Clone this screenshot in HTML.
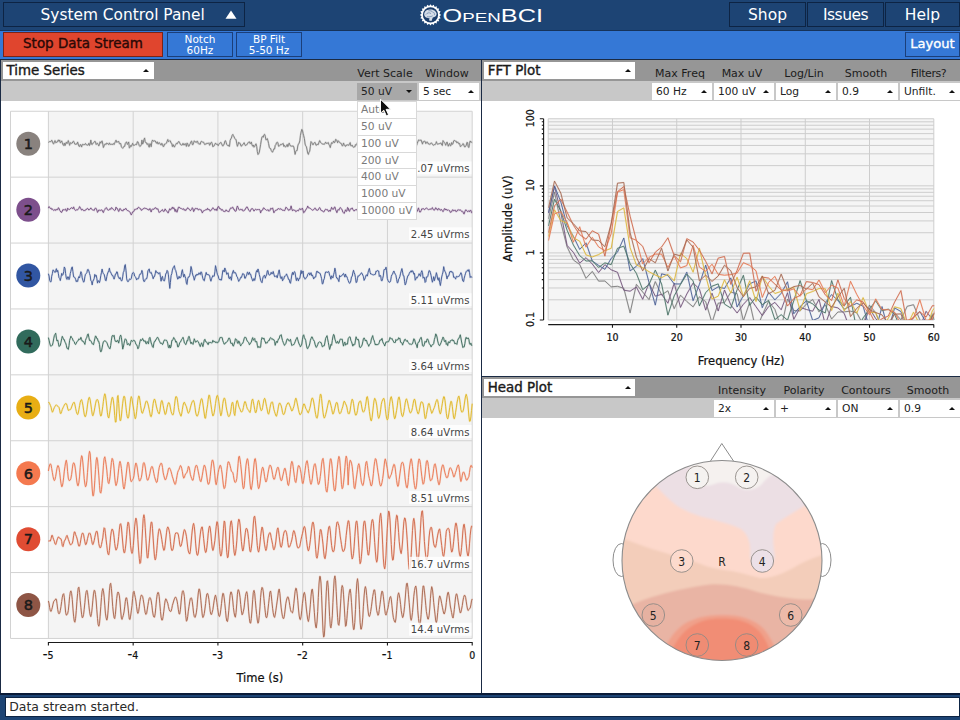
<!DOCTYPE html>
<html lang="en"><head><meta charset="utf-8"><title>OpenBCI GUI</title>
<style>
html,body{margin:0;padding:0}
body{width:960px;height:720px;overflow:hidden;background:#fff;position:relative;font-family:"DejaVu Sans","Liberation Sans",sans-serif;color:#1a1a1a}
div,span{box-sizing:border-box}
.abs{position:absolute}
#topnav{left:0;top:0;width:960px;height:30px;background:#1d4474}
#subnav{left:0;top:30px;width:960px;height:29px;background:#3578d6;border-top:1px solid #16335a}
.tbtn{position:absolute;top:2px;height:25px;background:#1d4474;border:1px solid #0d2444;color:#fff;font-size:15.5px;line-height:24px;text-align:center;white-space:nowrap}
.sbtn{position:absolute;top:32px;height:24.5px;background:#3578d6;border:1px solid #1b3f7a;color:#fff;font-size:10.5px;line-height:10.5px;text-align:center;white-space:nowrap}
.whead{position:absolute;height:21px;background:#969696}
.wsub{position:absolute;height:20.4px;background:#c8c8c8}
.wtitle{position:absolute;height:17px;background:#fff;font-size:13.4px;line-height:17px;padding-left:4px;white-space:nowrap;-webkit-text-stroke:.4px #1a1a1a}
.lab{position:absolute;font-size:11px;line-height:13px;text-align:center;white-space:nowrap;color:#1c1c1c;width:70px;margin-left:-35px}
.dd{position:absolute;width:60px;height:17px;background:#fff;font-size:10.7px;line-height:18px;padding-left:4px;white-space:nowrap;color:#222}
.tri{position:absolute;width:0;height:0;border-left:3px solid transparent;border-right:3px solid transparent;border-bottom:3.5px solid #111}
.trid{position:absolute;width:0;height:0;border-left:3px solid transparent;border-right:3px solid transparent;border-top:3.5px solid #111}
.item{position:absolute;left:357px;width:60px;height:17px;background:#fff;border:1px solid #d9d9d9;font-size:10.7px;line-height:16px;padding-left:3px;color:#7a7a7a;white-space:nowrap}
</style></head><body>
<div id="topnav" class="abs"></div>
<div id="subnav" class="abs"></div>
<div class="tbtn" style="left:3px;width:241.5px;text-align:left;padding-left:36.5px;line-height:24px;font-size:15.4px">System Control Panel</div>
<svg class="abs" style="left:224px;top:9px" width="14" height="11"><polygon points="1.5,9.8 7,1.5 12.5,9.8" fill="#fff"/></svg>
<div class="tbtn" style="left:729px;width:77px">Shop</div>
<div class="tbtn" style="left:807px;width:77px;letter-spacing:-.5px">Issues</div>
<div class="tbtn" style="left:885px;width:75px">Help</div>
<svg class="abs" style="left:414px;top:2px" width="132" height="26" viewBox="0 0 132 26">
<polygon points="16.50,2.20 17.89,4.11 19.81,2.72 20.54,4.97 22.79,4.24 22.79,6.61 25.16,6.61 24.43,8.86 26.68,9.59 25.29,11.51 27.20,12.90 25.29,14.29 26.68,16.21 24.43,16.94 25.16,19.19 22.79,19.19 22.79,21.56 20.54,20.83 19.81,23.08 17.89,21.69 16.50,23.60 15.11,21.69 13.19,23.08 12.46,20.83 10.21,21.56 10.21,19.19 7.84,19.19 8.57,16.94 6.32,16.21 7.71,14.29 5.80,12.90 7.71,11.51 6.32,9.59 8.57,8.86 7.84,6.61 10.21,6.61 10.21,4.24 12.46,4.97 13.19,2.72 15.11,4.11" fill="#fff"/>
<circle cx="16.5" cy="12.9" r="9.1" fill="#fff"/>
<circle cx="16.5" cy="12.9" r="7.6" fill="#1d3f6c"/>
<path d="M10.4 13.6c-.9-3.2 1.8-6 5.2-6 2.9-.5 6.6 1.2 7 4 .3 2.2-1.5 3.7-3.800 4l-1.3 3.4-2.4-.6.3-2.3c-2.5.2-4.4-.7-5-2.5z" fill="#d5dde8"/>
<path d="M11.8 12.6c1.4-2 3.6-2.3 5.200-1m-2.6-2.800c1.800-.5 3.800.3 4.800 1.800m-6 4c1.800.5 3.800.2 5.4-.8m.8-3.6c.9.7 1.3 1.800 1 2.900" fill="none" stroke="#5f7ea6" stroke-width=".7"/>
<text x="28.6" y="19.7" font-family="&quot;Liberation Sans&quot;,&quot;DejaVu Sans&quot;,sans-serif" fill="#fff" font-size="17.5" textLength="100.4" lengthAdjust="spacingAndGlyphs">O<tspan font-size="13">PEN</tspan>BCI</text>
</svg>
<div class="sbtn" style="left:3px;width:160px;background:#e0452e;border-color:#7a2418;color:#2a0906;font-size:13.45px;line-height:22px;-webkit-text-stroke:.38px #2a0906">Stop Data Stream</div>
<div class="sbtn" style="left:167px;width:66px;padding-top:1px">Notch<br>60Hz</div>
<div class="sbtn" style="left:236px;width:66px;padding-top:1px">BP Filt<br>5-50 Hz</div>
<div class="sbtn" style="left:905px;width:55px;font-size:13.1px;line-height:22.5px;-webkit-text-stroke:.35px #fff">Layout</div>
<div class="abs" style="left:0;top:59px;width:960px;height:1px;background:#1a2a44"></div>
<div class="whead" style="left:0px;top:60px;width:481px"></div>
<div class="wsub" style="left:0px;top:81px;width:481px"></div>
<div class="wtitle" style="left:2.5px;top:62px;width:151.5px">Time Series</div>
<div class="tri" style="left:143px;top:69px"></div>
<div class="lab" style="left:385px;top:67px">Vert Scale</div>
<div class="lab" style="left:447px;top:67px">Window</div>
<div class="dd" style="left:357px;top:83px;background:#a8a8a8">50 uV</div>
<div class="trid" style="left:406px;top:90px"></div>
<div class="dd" style="left:419px;top:83px">5 sec</div>
<div class="tri" style="left:468px;top:90px"></div>
<div class="whead" style="left:482px;top:60px;width:478px"></div>
<div class="wsub" style="left:482px;top:81px;width:478px"></div>
<div class="wtitle" style="left:483.7px;top:62px;width:151.5px">FFT Plot</div>
<div class="tri" style="left:625px;top:69px"></div>
<div class="lab" style="left:680px;top:67px">Max Freq</div>
<div class="lab" style="left:742px;top:67px">Max uV</div>
<div class="lab" style="left:804px;top:67px">Log/Lin</div>
<div class="lab" style="left:866px;top:67px">Smooth</div>
<div class="lab" style="left:928.5px;top:67px"><span style="letter-spacing:-.4px">Filters?</span></div>
<div class="dd" style="left:652px;top:83px">60 Hz</div>
<div class="tri" style="left:701px;top:90px"></div>
<div class="dd" style="left:714px;top:83px">100 uV</div>
<div class="tri" style="left:763px;top:90px"></div>
<div class="dd" style="left:776px;top:83px">Log</div>
<div class="tri" style="left:825px;top:90px"></div>
<div class="dd" style="left:838px;top:83px">0.9</div>
<div class="tri" style="left:887px;top:90px"></div>
<div class="dd" style="left:900px;top:83px">Unfilt.</div>
<div class="tri" style="left:949px;top:90px"></div>
<div class="whead" style="left:482px;top:377px;width:478px"></div>
<div class="wsub" style="left:482px;top:398px;width:478px"></div>
<div class="wtitle" style="left:483.7px;top:379px;width:151.5px">Head Plot</div>
<div class="tri" style="left:625px;top:386px"></div>
<div class="lab" style="left:742px;top:384px">Intensity</div>
<div class="lab" style="left:804px;top:384px">Polarity</div>
<div class="lab" style="left:866px;top:384px">Contours</div>
<div class="lab" style="left:928px;top:384px">Smooth</div>
<div class="dd" style="left:714px;top:400px">2x</div>
<div class="tri" style="left:763px;top:407px"></div>
<div class="dd" style="left:776px;top:400px">+</div>
<div class="tri" style="left:825px;top:407px"></div>
<div class="dd" style="left:838px;top:400px">ON</div>
<div class="tri" style="left:887px;top:407px"></div>
<div class="dd" style="left:900px;top:400px">0.9</div>
<div class="tri" style="left:949px;top:407px"></div>
<div class="abs" style="left:0;top:60px;width:1px;height:634px;background:#1a2a44"></div>
<div class="abs" style="left:480.5px;top:59px;width:1.6px;height:635px;background:#1a2a44"></div>
<div class="abs" style="left:481px;top:376px;width:479px;height:1px;background:#1a2a44"></div>
<svg class="abs" style="left:0;top:101px" width="481" height="592" viewBox="0 101 481 592" font-family='&quot;DejaVu Sans Condensed&quot;,&quot;DejaVu Sans&quot;,&quot;Liberation Sans&quot;,sans-serif'>
<rect x="48.4" y="111.25" width="423.8" height="527.2" fill="#f4f4f4"/>
<path d="M48.40 111.25V638.45M133.16 111.25V638.45M217.92 111.25V638.45M302.68 111.25V638.45M387.44 111.25V638.45M472.20 111.25V638.45M10.5 111.25H472.20M10.5 177.15H472.20M10.5 243.05H472.20M10.5 308.95H472.20M10.5 374.85H472.20M10.5 440.75H472.20M10.5 506.65H472.20M10.5 572.55H472.20M10.5 638.45H472.20M10.5 111.25V638.45" fill="none" stroke="#d2d2d2" stroke-width="1"/>
<defs><path id="w1" d="M48.4 142.4L49.1 141.9L49.7 141.5L50.4 141.6L51.1 141.6L51.7 140.2L52.4 141.2L53.0 143.5L53.7 143.9L54.4 141.8L55.0 140.6L55.7 142.7L56.4 142.4L57.0 142.4L57.7 140.6L58.3 140.0L59.0 141.4L59.7 140.1L60.3 142.8L61.0 142.4L61.7 140.9L62.3 142.6L63.0 144.7L63.7 145.5L64.3 143.1L65.0 145.6L65.6 144.0L66.3 142.2L67.0 143.6L67.6 142.6L68.3 140.6L69.0 142.9L69.6 145.3L70.3 143.0L70.9 142.5L71.6 143.5L72.3 143.0L72.9 141.6L73.6 141.2L74.3 142.8L74.9 144.2L75.6 144.3L76.3 143.9L76.9 144.3L77.6 142.0L78.2 144.0L78.9 146.2L79.6 146.5L80.2 144.6L80.9 144.8L81.6 147.0L82.2 144.7L82.9 144.1L83.6 144.8L84.2 144.5L84.9 144.7L85.5 143.5L86.2 144.6L86.9 145.0L87.5 145.2L88.2 145.0L88.9 143.2L89.5 145.5L90.2 143.9L90.8 140.1L91.5 144.2L92.2 144.6L92.8 143.2L93.5 142.8L94.2 142.3L94.8 141.2L95.5 141.9L96.2 144.5L96.8 143.6L97.5 143.3L98.1 144.4L98.8 145.9L99.5 144.1L100.1 141.8L100.8 143.2L101.5 141.4L102.1 140.9L102.8 144.1L103.4 147.5L104.1 145.8L104.8 144.2L105.4 144.0L106.1 144.5L106.8 143.1L107.4 143.5L108.1 143.8L108.8 144.7L109.4 142.9L110.1 144.2L110.7 144.5L111.4 144.3L112.1 144.2L112.7 144.6L113.4 143.5L114.1 144.5L114.7 143.2L115.4 141.5L116.0 140.2L116.7 142.3L117.4 141.9L118.0 141.8L118.7 141.4L119.4 143.7L120.0 143.8L120.7 143.4L121.4 146.8L122.0 147.6L122.7 148.3L123.3 147.6L124.0 146.2L124.7 146.3L125.3 143.5L126.0 142.3L126.7 142.0L127.3 144.4L128.0 143.8L128.7 142.0L129.3 147.9L130.0 147.4L130.6 145.5L131.3 146.4L132.0 144.8L132.6 143.3L133.3 145.3L134.0 145.0L134.6 145.2L135.3 144.7L135.9 144.1L136.6 144.7L137.3 141.8L137.9 141.8L138.6 143.5L139.3 145.7L139.9 146.5L140.6 145.9L141.3 144.8L141.9 140.1L142.6 144.1L143.2 143.0L143.9 139.8L144.6 138.0L145.2 141.8L145.9 142.8L146.6 142.9L147.2 144.5L147.9 143.6L148.5 145.7L149.2 147.2L149.9 143.6L150.5 144.0L151.2 146.7L151.9 141.5L152.5 140.1L153.2 141.3L153.9 140.9L154.5 140.8L155.2 140.9L155.8 142.2L156.5 143.3L157.2 141.8L157.8 143.8L158.5 143.9L159.2 142.5L159.8 143.4L160.5 144.6L161.1 145.1L161.8 143.3L162.5 144.3L163.1 146.5L163.8 146.4L164.5 144.1L165.1 144.3L165.8 143.5L166.5 143.1L167.1 141.3L167.8 139.5L168.4 141.6L169.1 141.4L169.8 140.6L170.4 141.0L171.1 143.2L171.8 143.5L172.4 146.6L173.1 144.6L173.7 146.0L174.4 147.1L175.1 145.6L175.7 144.6L176.4 143.3L177.1 143.9L177.7 143.0L178.4 141.7L179.1 141.6L179.7 142.8L180.4 144.4L181.0 144.9L181.7 145.1L182.4 144.8L183.0 143.3L183.7 144.9L184.4 144.9L185.0 143.5L185.7 144.1L186.4 146.4L187.0 143.0L187.7 143.6L188.3 146.1L189.0 146.2L189.7 144.4L190.3 143.6L191.0 141.5L191.7 141.1L192.3 144.6L193.0 144.7L193.6 142.9L194.3 140.8L195.0 141.8L195.6 142.0L196.3 142.5L197.0 141.1L197.6 141.4L198.3 143.6L199.0 144.3L199.6 143.8L200.3 144.2L200.9 141.7L201.6 141.3L202.3 142.0L202.9 142.3L203.6 142.2L204.3 143.8L204.9 144.7L205.6 143.8L206.2 144.1L206.9 143.2L207.6 143.4L208.2 143.5L208.9 142.8L209.6 145.3L210.2 144.5L210.9 142.6L211.6 142.2L212.2 143.7L212.9 146.8L213.5 146.0L214.2 145.8L214.9 144.2L215.5 143.1L216.2 144.2L216.9 144.4L217.5 144.2L218.2 145.7L218.8 144.4L219.5 143.4L220.2 143.3L220.8 142.3L221.5 143.4L222.2 145.2L222.8 146.1L223.5 145.1L224.2 144.0L224.8 141.3L225.5 140.7L226.1 142.4L226.8 144.6L227.5 145.4L228.1 145.0L228.8 146.2L229.5 146.3L230.1 140.6L230.8 138.9L231.4 138.1L232.1 135.5L232.8 134.4L233.4 135.6L234.1 136.9L234.8 138.6L235.4 139.0L236.1 139.8L236.8 143.8L237.4 146.3L238.1 144.4L238.7 142.3L239.4 143.2L240.1 143.3L240.7 145.4L241.4 146.3L242.1 144.8L242.7 144.7L243.4 144.1L244.1 142.7L244.7 144.2L245.4 145.6L246.0 145.0L246.7 144.9L247.4 143.9L248.0 142.8L248.7 142.1L249.4 141.8L250.0 143.6L250.7 143.5L251.3 142.0L252.0 144.9L252.7 146.2L253.3 145.0L254.0 147.2L254.7 146.4L255.3 144.9L256.0 143.8L256.7 146.5L257.3 151.4L258.0 154.5L258.6 153.8L259.3 152.2L260.0 148.2L260.6 144.5L261.3 140.2L262.0 136.9L262.6 136.5L263.3 137.2L263.9 134.9L264.6 134.3L265.3 136.2L265.9 139.8L266.6 139.7L267.3 138.6L267.9 140.6L268.6 143.6L269.3 147.3L269.9 148.4L270.6 148.5L271.2 150.4L271.9 151.7L272.6 152.1L273.2 150.7L273.9 148.8L274.6 149.0L275.2 145.5L275.9 144.6L276.5 142.7L277.2 142.2L277.9 142.7L278.5 146.2L279.2 146.2L279.9 145.4L280.5 144.4L281.2 144.7L281.9 144.1L282.5 143.9L283.2 143.4L283.8 146.4L284.5 145.4L285.2 146.8L285.8 146.8L286.5 146.2L287.2 144.4L287.8 146.7L288.5 144.9L289.2 143.1L289.8 144.8L290.5 146.0L291.1 146.4L291.8 146.0L292.5 146.2L293.1 145.8L293.8 146.9L294.5 150.8L295.1 154.4L295.8 151.4L296.4 150.6L297.1 150.6L297.8 145.9L298.4 144.1L299.1 143.2L299.8 140.9L300.4 135.7L301.1 132.1L301.8 129.4L302.4 130.2L303.1 133.4L303.7 135.8L304.4 138.6L305.1 144.1L305.7 145.8L306.4 146.7L307.1 150.0L307.7 153.0L308.4 154.4L309.0 152.2L309.7 151.3L310.4 146.2L311.0 141.6L311.7 142.4L312.4 143.8L313.0 144.9L313.7 143.4L314.4 142.7L315.0 142.3L315.7 144.7L316.3 145.4L317.0 144.1L317.7 144.5L318.3 144.6L319.0 142.2L319.7 140.6L320.3 142.2L321.0 142.6L321.6 143.3L322.3 144.1L323.0 144.0L323.6 144.2L324.3 144.4L325.0 143.2L325.6 142.1L326.3 143.4L327.0 143.3L327.6 143.1L328.3 142.5L328.9 144.5L329.6 145.7L330.3 147.6L330.9 144.8L331.6 142.6L332.3 143.5L332.9 142.6L333.6 141.0L334.2 142.7L334.9 142.3L335.6 139.4L336.2 139.6L336.9 140.8L337.6 142.8L338.2 140.7L338.9 141.5L339.6 142.5L340.2 143.0L340.9 143.1L341.5 144.1L342.2 145.8L342.9 145.7L343.5 143.0L344.2 144.7L344.9 145.8L345.5 146.4L346.2 144.9L346.9 145.5L347.5 144.7L348.2 145.2L348.8 145.3L349.5 143.6L350.2 142.6L350.8 145.8L351.5 145.9L352.2 145.1L352.8 146.7L353.5 147.2L354.1 146.7L354.8 147.0L355.5 144.6L356.1 145.2L356.8 144.4L357.5 142.4L358.1 145.0L358.8 144.0L359.5 144.2L360.1 144.5L360.8 143.4L361.4 142.5L362.1 141.8L362.8 141.5L363.4 141.0L364.1 143.4L364.8 142.5L365.4 143.7L366.1 142.9L366.7 138.3L367.4 139.2L368.1 140.6L368.7 141.9L369.4 142.0L370.1 142.8L370.7 142.8L371.4 142.7L372.1 142.1L372.7 144.3L373.4 143.7L374.0 143.6L374.7 144.7L375.4 144.8L376.0 144.2L376.7 144.2L377.4 146.9L378.0 148.9L378.7 143.8L379.3 141.1L380.0 141.6L380.7 143.0L381.3 143.1L382.0 140.7L382.7 141.9L383.3 142.8L384.0 145.4L384.7 146.0L385.3 142.7L386.0 141.6L386.6 141.8L387.3 145.1L388.0 144.7L388.6 143.1L389.3 141.6L390.0 142.4L390.6 145.1L391.3 144.7L391.9 144.1L392.6 144.0L393.3 142.8L393.9 143.3L394.6 144.4L395.3 144.7L395.9 145.5L396.6 144.1L397.3 145.7L397.9 145.3L398.6 142.4L399.2 143.6L399.9 145.2L400.6 143.2L401.2 141.9L401.9 140.8L402.6 140.6L403.2 141.5L403.9 144.3L404.6 146.7L405.2 148.0L405.9 148.2L406.5 145.7L407.2 145.6L407.9 145.0L408.5 142.9L409.2 143.7L409.9 144.5L410.5 143.5L411.2 144.1L411.8 145.3L412.5 147.0L413.2 146.9L413.8 146.2L414.5 145.4L415.2 145.2L415.8 144.8L416.5 145.7L417.2 143.6L417.8 141.9L418.5 140.1L419.1 139.8L419.8 140.6L420.5 140.2L421.1 140.0L421.8 142.0L422.5 144.1L423.1 141.6L423.8 141.8L424.4 141.3L425.1 141.4L425.8 143.6L426.4 142.9L427.1 141.8L427.8 142.8L428.4 144.0L429.1 143.7L429.8 144.5L430.4 143.5L431.1 142.9L431.7 143.1L432.4 144.2L433.1 145.1L433.7 145.2L434.4 144.6L435.1 144.7L435.7 143.9L436.4 141.7L437.0 143.6L437.7 144.2L438.4 143.9L439.0 143.9L439.7 143.5L440.4 143.3L441.0 142.9L441.7 144.9L442.4 145.5L443.0 140.6L443.7 141.6L444.3 142.4L445.0 143.4L445.7 145.3L446.3 143.7L447.0 142.0L447.7 144.4L448.3 146.2L449.0 144.1L449.7 143.5L450.3 145.8L451.0 145.5L451.6 142.6L452.3 144.3L453.0 143.8L453.6 141.0L454.3 140.3L455.0 141.1L455.6 141.2L456.3 141.3L456.9 142.9L457.6 141.9L458.3 142.9L458.9 143.9L459.6 143.4L460.3 146.5L460.9 146.4L461.6 145.6L462.3 144.8L462.9 143.6L463.6 144.0L464.2 146.2L464.9 147.1L465.6 145.9L466.2 145.6L466.9 142.4L467.6 142.6L468.2 146.9L468.9 147.5L469.5 143.5L470.2 141.0L470.9 142.3L471.5 142.1L472.2 142.7"/></defs>
<use href="#w1" fill="none" stroke="#b0b0b0" stroke-opacity=".4" stroke-width="1.9" stroke-linejoin="round"/>
<use href="#w1" fill="none" stroke="#7f7f7f" stroke-width=".95" stroke-linejoin="round"/>
<circle cx="28.3" cy="143.8" r="12" fill="#89827e"/>
<text x="28.3" y="149.0" text-anchor="middle" font-size="14.5" fill="#1a1a1a" stroke="#1a1a1a" stroke-width=".5" font-family="&quot;DejaVu Sans&quot;,&quot;Liberation Sans&quot;,sans-serif">1</text>
<rect x="409" y="161.4" width="62.5" height="13" fill="#fff" fill-opacity=".8"/>
<text x="469.5" y="172.1" text-anchor="end" font-size="11.2" letter-spacing=".1" fill="#444">1.07 uVrms</text>
<defs><path id="w2" d="M48.4 208.2L49.1 206.6L49.7 207.5L50.4 208.5L51.1 208.1L51.7 209.4L52.4 208.9L53.0 209.8L53.7 210.5L54.4 210.1L55.0 209.4L55.7 210.5L56.4 209.4L57.0 209.5L57.7 209.7L58.3 207.8L59.0 208.2L59.7 210.4L60.3 210.9L61.0 212.2L61.7 212.4L62.3 211.0L63.0 209.4L63.7 209.9L64.3 210.1L65.0 209.3L65.6 209.0L66.3 211.1L67.0 211.0L67.6 208.2L68.3 209.2L69.0 209.1L69.6 209.5L70.3 208.9L70.9 208.0L71.6 207.7L72.3 208.0L72.9 208.8L73.6 206.9L74.3 208.7L74.9 209.8L75.6 210.5L76.3 210.2L76.9 209.4L77.6 209.8L78.2 209.4L78.9 208.3L79.6 206.6L80.2 207.4L80.9 208.8L81.6 210.2L82.2 209.2L82.9 209.6L83.6 210.6L84.2 210.4L84.9 210.8L85.5 210.1L86.2 209.1L86.9 209.3L87.5 208.4L88.2 208.9L88.9 210.1L89.5 209.4L90.2 209.0L90.8 207.9L91.5 209.2L92.2 209.5L92.8 210.1L93.5 210.1L94.2 210.5L94.8 209.0L95.5 207.9L96.2 208.7L96.8 209.9L97.5 212.4L98.1 211.5L98.8 210.0L99.5 210.2L100.1 210.7L100.8 210.2L101.5 209.9L102.1 210.1L102.8 211.9L103.4 212.6L104.1 210.5L104.8 209.6L105.4 208.3L106.1 207.6L106.8 208.1L107.4 209.7L108.1 210.1L108.8 210.1L109.4 209.7L110.1 208.6L110.7 209.4L111.4 207.7L112.1 207.9L112.7 208.7L113.4 209.6L114.1 210.1L114.7 210.6L115.4 210.0L116.0 207.1L116.7 208.4L117.4 208.5L118.0 210.1L118.7 211.5L119.4 209.9L120.0 208.4L120.7 209.4L121.4 210.4L122.0 210.1L122.7 211.1L123.3 210.4L124.0 209.0L124.7 209.7L125.3 208.7L126.0 208.4L126.7 209.9L127.3 210.5L128.0 210.7L128.7 211.0L129.3 211.4L130.0 212.1L130.6 213.8L131.3 214.9L132.0 213.4L132.6 211.9L133.3 211.9L134.0 211.1L134.6 209.4L135.3 209.3L135.9 209.5L136.6 208.9L137.3 209.0L137.9 207.7L138.6 207.2L139.3 208.0L139.9 208.5L140.6 208.7L141.3 210.3L141.9 210.2L142.6 209.2L143.2 208.6L143.9 208.8L144.6 207.9L145.2 208.4L145.9 208.5L146.6 208.6L147.2 209.4L147.9 209.1L148.5 210.1L149.2 209.9L149.9 208.5L150.5 210.6L151.2 212.0L151.9 209.7L152.5 209.0L153.2 209.3L153.9 209.3L154.5 208.2L155.2 207.8L155.8 207.7L156.5 209.0L157.2 209.2L157.8 208.7L158.5 210.8L159.2 212.5L159.8 211.9L160.5 211.7L161.1 210.7L161.8 210.2L162.5 209.6L163.1 211.2L163.8 211.5L164.5 211.0L165.1 208.9L165.8 210.2L166.5 210.7L167.1 211.6L167.8 212.8L168.4 212.8L169.1 210.2L169.8 208.7L170.4 210.0L171.1 209.5L171.8 208.2L172.4 207.1L173.1 208.9L173.7 207.6L174.4 208.7L175.1 211.5L175.7 209.4L176.4 211.7L177.1 212.2L177.7 210.0L178.4 207.3L179.1 207.0L179.7 207.9L180.4 208.3L181.0 208.2L181.7 208.9L182.4 209.3L183.0 208.8L183.7 208.8L184.4 210.3L185.0 209.6L185.7 210.6L186.4 209.3L187.0 209.0L187.7 207.7L188.3 208.5L189.0 209.2L189.7 209.4L190.3 210.7L191.0 210.2L191.7 209.4L192.3 207.7L193.0 208.8L193.6 211.6L194.3 210.6L195.0 208.6L195.6 208.4L196.3 208.7L197.0 208.4L197.6 208.6L198.3 210.0L199.0 209.4L199.6 209.3L200.3 209.9L200.9 209.5L201.6 210.9L202.3 212.9L202.9 211.9L203.6 210.7L204.3 210.6L204.9 210.2L205.6 209.8L206.2 209.4L206.9 210.0L207.6 208.3L208.2 209.5L208.9 209.6L209.6 209.7L210.2 211.2L210.9 210.3L211.6 209.8L212.2 208.8L212.9 207.7L213.5 208.7L214.2 209.1L214.9 210.3L215.5 209.8L216.2 208.9L216.9 210.6L217.5 208.1L218.2 206.5L218.8 206.7L219.5 208.6L220.2 208.6L220.8 208.8L221.5 210.3L222.2 209.4L222.8 210.3L223.5 211.4L224.2 211.3L224.8 211.8L225.5 211.0L226.1 209.8L226.8 210.9L227.5 211.2L228.1 211.2L228.8 211.8L229.5 210.2L230.1 208.9L230.8 207.8L231.4 208.2L232.1 207.6L232.8 207.1L233.4 209.1L234.1 209.1L234.8 210.9L235.4 211.3L236.1 211.0L236.8 207.6L237.4 206.0L238.1 207.5L238.7 209.4L239.4 209.9L240.1 209.9L240.7 209.2L241.4 209.7L242.1 209.2L242.7 210.7L243.4 211.1L244.1 210.3L244.7 210.2L245.4 209.0L246.0 208.0L246.7 206.9L247.4 207.2L248.0 208.7L248.7 210.1L249.4 210.8L250.0 211.6L250.7 210.2L251.3 208.9L252.0 208.6L252.7 208.7L253.3 209.7L254.0 211.1L254.7 209.9L255.3 209.3L256.0 209.5L256.7 209.9L257.3 209.7L258.0 209.3L258.6 210.0L259.3 209.3L260.0 210.2L260.6 213.0L261.3 210.7L262.0 210.6L262.6 210.1L263.3 208.1L263.9 207.8L264.6 208.9L265.3 209.4L265.9 209.7L266.6 210.4L267.3 210.2L267.9 209.6L268.6 211.0L269.3 211.1L269.9 210.5L270.6 208.4L271.2 208.7L271.9 208.9L272.6 207.9L273.2 210.1L273.9 212.8L274.6 211.6L275.2 210.6L275.9 210.2L276.5 210.1L277.2 209.9L277.9 208.7L278.5 208.6L279.2 208.7L279.9 209.5L280.5 208.6L281.2 209.3L281.9 209.4L282.5 210.4L283.2 210.4L283.8 210.1L284.5 210.8L285.2 209.4L285.8 207.3L286.5 207.5L287.2 208.6L287.8 209.0L288.5 210.4L289.2 209.5L289.8 210.1L290.5 208.4L291.1 205.9L291.8 208.9L292.5 210.8L293.1 209.9L293.8 210.0L294.5 210.3L295.1 210.3L295.8 211.7L296.4 211.4L297.1 210.4L297.8 210.5L298.4 210.8L299.1 209.5L299.8 208.5L300.4 209.6L301.1 209.7L301.8 208.7L302.4 208.1L303.1 210.5L303.7 212.8L304.4 212.2L305.1 210.9L305.7 210.0L306.4 208.8L307.1 207.9L307.7 206.0L308.4 207.8L309.0 208.0L309.7 208.0L310.4 208.5L311.0 208.9L311.7 209.6L312.4 210.3L313.0 209.9L313.7 209.7L314.4 208.6L315.0 207.9L315.7 208.7L316.3 210.1L317.0 210.0L317.7 210.3L318.3 209.8L319.0 208.2L319.7 207.6L320.3 208.5L321.0 210.4L321.6 210.6L322.3 210.8L323.0 211.2L323.6 212.0L324.3 211.5L325.0 209.7L325.6 209.3L326.3 209.7L327.0 209.5L327.6 209.7L328.3 211.2L328.9 211.5L329.6 210.3L330.3 211.3L330.9 209.5L331.6 207.3L332.3 209.0L332.9 209.4L333.6 209.2L334.2 207.4L334.9 206.9L335.6 209.6L336.2 211.0L336.9 212.7L337.6 210.4L338.2 209.5L338.9 210.3L339.6 208.3L340.2 207.5L340.9 208.2L341.5 208.9L342.2 210.0L342.9 212.2L343.5 212.7L344.2 213.4L344.9 211.5L345.5 209.8L346.2 211.4L346.9 211.0L347.5 207.5L348.2 208.0L348.8 210.7L349.5 211.4L350.2 209.1L350.8 208.8L351.5 208.9L352.2 207.9L352.8 209.4L353.5 210.4L354.1 211.1L354.8 210.1L355.5 209.8L356.1 209.8L356.8 209.4L357.5 211.0L358.1 211.3L358.8 210.2L359.5 209.8L360.1 209.6L360.8 209.6L361.4 209.9L362.1 210.6L362.8 211.9L363.4 211.7L364.1 212.1L364.8 211.6L365.4 211.0L366.1 208.2L366.7 208.2L367.4 209.1L368.1 209.2L368.7 210.3L369.4 211.9L370.1 211.7L370.7 210.6L371.4 208.2L372.1 208.0L372.7 208.1L373.4 209.9L374.0 209.5L374.7 208.3L375.4 210.5L376.0 210.6L376.7 209.9L377.4 209.6L378.0 209.3L378.7 209.5L379.3 208.5L380.0 209.6L380.7 211.0L381.3 209.4L382.0 206.3L382.7 207.3L383.3 208.4L384.0 211.0L384.7 212.6L385.3 210.8L386.0 210.3L386.6 210.6L387.3 209.5L388.0 210.0L388.6 210.8L389.3 209.8L390.0 211.5L390.6 213.5L391.3 214.1L391.9 213.6L392.6 211.7L393.3 209.7L393.9 208.0L394.6 209.0L395.3 209.9L395.9 207.8L396.6 208.5L397.3 211.2L397.9 210.9L398.6 210.1L399.2 210.0L399.9 209.7L400.6 210.7L401.2 208.8L401.9 206.8L402.6 208.9L403.2 210.0L403.9 209.2L404.6 210.5L405.2 210.7L405.9 210.8L406.5 212.3L407.2 210.1L407.9 209.4L408.5 209.6L409.2 208.8L409.9 206.3L410.5 206.7L411.2 208.8L411.8 209.3L412.5 209.2L413.2 209.2L413.8 210.1L414.5 211.3L415.2 211.3L415.8 212.4L416.5 212.1L417.2 211.3L417.8 209.5L418.5 207.9L419.1 210.3L419.8 212.1L420.5 211.9L421.1 210.6L421.8 208.8L422.5 208.9L423.1 208.6L423.8 208.8L424.4 209.7L425.1 209.0L425.8 208.7L426.4 207.9L427.1 208.5L427.8 209.2L428.4 209.6L429.1 209.6L429.8 209.1L430.4 209.0L431.1 209.5L431.7 208.6L432.4 207.6L433.1 209.5L433.7 209.8L434.4 210.2L435.1 209.0L435.7 207.7L436.4 209.0L437.0 208.9L437.7 210.2L438.4 208.5L439.0 208.9L439.7 209.1L440.4 210.4L441.0 209.5L441.7 209.7L442.4 210.7L443.0 211.7L443.7 210.6L444.3 208.8L445.0 208.6L445.7 210.0L446.3 209.2L447.0 210.4L447.7 210.1L448.3 209.8L449.0 210.5L449.7 210.7L450.3 212.4L451.0 212.1L451.6 211.8L452.3 210.1L453.0 209.7L453.6 210.8L454.3 210.6L455.0 209.9L455.6 211.1L456.3 211.9L456.9 211.2L457.6 210.0L458.3 209.6L458.9 210.4L459.6 210.0L460.3 209.9L460.9 210.3L461.6 211.5L462.3 211.1L462.9 211.7L463.6 213.7L464.2 213.9L464.9 211.5L465.6 209.9L466.2 209.9L466.9 210.9L467.6 211.7L468.2 211.5L468.9 210.6L469.5 211.7L470.2 210.5L470.9 210.3L471.5 212.7L472.2 212.2"/></defs>
<use href="#w2" fill="none" stroke="#c0a0c8" stroke-opacity=".4" stroke-width="1.9" stroke-linejoin="round"/>
<use href="#w2" fill="none" stroke="#75557f" stroke-width=".95" stroke-linejoin="round"/>
<circle cx="28.3" cy="209.7" r="12" fill="#7d4f8c"/>
<text x="28.3" y="214.9" text-anchor="middle" font-size="14.5" fill="#1a1a1a" stroke="#1a1a1a" stroke-width=".5" font-family="&quot;DejaVu Sans&quot;,&quot;Liberation Sans&quot;,sans-serif">2</text>
<rect x="409" y="227.3" width="62.5" height="13" fill="#fff" fill-opacity=".8"/>
<text x="469.5" y="238.0" text-anchor="end" font-size="11.2" letter-spacing=".1" fill="#444">2.45 uVrms</text>
<defs><path id="w3" d="M48.4 273.7L49.1 276.1L49.7 280.4L50.4 281.8L51.1 281.7L51.7 276.2L52.4 273.6L53.0 269.9L53.7 270.5L54.4 271.7L55.0 272.5L55.7 270.5L56.4 268.7L57.0 272.0L57.7 270.3L58.3 273.3L59.0 277.7L59.7 278.5L60.3 280.6L61.0 277.2L61.7 273.4L62.3 275.4L63.0 274.6L63.7 271.7L64.3 267.0L65.0 268.3L65.6 273.6L66.3 278.2L67.0 279.4L67.6 276.9L68.3 276.9L69.0 279.6L69.6 278.3L70.3 273.4L70.9 271.2L71.6 267.9L72.3 266.9L72.9 271.5L73.6 276.9L74.3 277.2L74.9 277.5L75.6 279.4L76.3 281.7L76.9 280.6L77.6 281.5L78.2 278.5L78.9 276.6L79.6 277.8L80.2 274.8L80.9 271.7L81.6 273.4L82.2 277.9L82.9 280.3L83.6 282.2L84.2 281.4L84.9 276.7L85.5 274.3L86.2 273.6L86.9 272.5L87.5 269.7L88.2 269.4L88.9 271.1L89.5 273.5L90.2 275.7L90.8 280.4L91.5 281.3L92.2 284.9L92.8 281.3L93.5 280.0L94.2 278.5L94.8 274.4L95.5 276.3L96.2 275.3L96.8 278.3L97.5 283.1L98.1 280.7L98.8 281.0L99.5 282.6L100.1 280.1L100.8 275.6L101.5 272.3L102.1 269.1L102.8 272.4L103.4 273.6L104.1 274.3L104.8 277.0L105.4 280.3L106.1 280.8L106.8 276.6L107.4 274.1L108.1 272.1L108.8 270.6L109.4 268.2L110.1 272.1L110.7 272.2L111.4 273.9L112.1 275.5L112.7 275.3L113.4 277.4L114.1 279.1L114.7 277.2L115.4 274.2L116.0 274.1L116.7 271.8L117.4 272.1L118.0 276.0L118.7 277.7L119.4 278.8L120.0 277.4L120.7 279.5L121.4 280.8L122.0 280.7L122.7 276.9L123.3 272.5L124.0 271.1L124.7 265.7L125.3 264.6L126.0 270.6L126.7 278.9L127.3 280.9L128.0 281.8L128.7 280.8L129.3 279.3L130.0 278.8L130.6 279.5L131.3 278.4L132.0 274.6L132.6 273.0L133.3 272.4L134.0 273.2L134.6 276.0L135.3 276.6L135.9 277.8L136.6 279.9L137.3 278.5L137.9 279.1L138.6 278.5L139.3 275.7L139.9 274.2L140.6 274.2L141.3 272.9L141.9 270.4L142.6 272.6L143.2 279.2L143.9 281.5L144.6 281.4L145.2 279.4L145.9 278.7L146.6 278.9L147.2 276.8L147.9 270.9L148.5 270.0L149.2 268.9L149.9 272.6L150.5 272.9L151.2 272.3L151.9 274.5L152.5 276.3L153.2 278.8L153.9 276.5L154.5 276.6L155.2 273.8L155.8 270.6L156.5 271.7L157.2 273.0L157.8 272.4L158.5 274.1L159.2 273.3L159.8 272.6L160.5 277.4L161.1 281.2L161.8 277.2L162.5 276.4L163.1 280.0L163.8 280.7L164.5 280.8L165.1 277.8L165.8 273.5L166.5 273.2L167.1 270.4L167.8 271.5L168.4 274.8L169.1 282.0L169.8 288.4L170.4 282.5L171.1 275.5L171.8 273.5L172.4 270.1L173.1 267.8L173.7 267.0L174.4 265.7L175.1 269.4L175.7 270.4L176.4 273.1L177.1 276.9L177.7 279.1L178.4 278.6L179.1 276.3L179.7 278.0L180.4 277.8L181.0 276.9L181.7 272.1L182.4 269.7L183.0 273.6L183.7 277.1L184.4 274.3L185.0 276.4L185.7 278.3L186.4 283.3L187.0 284.4L187.7 278.8L188.3 277.0L189.0 277.1L189.7 275.4L190.3 272.7L191.0 266.5L191.7 269.0L192.3 272.9L193.0 275.7L193.6 276.9L194.3 280.2L195.0 277.6L195.6 275.2L196.3 275.6L197.0 274.0L197.6 275.0L198.3 274.7L199.0 272.8L199.6 274.1L200.3 274.6L200.9 271.9L201.6 272.3L202.3 275.9L202.9 278.6L203.6 280.2L204.3 280.8L204.9 277.7L205.6 274.5L206.2 272.4L206.9 274.8L207.6 274.1L208.2 275.1L208.9 274.7L209.6 275.6L210.2 278.9L210.9 281.2L211.6 278.6L212.2 277.2L212.9 275.6L213.5 276.3L214.2 276.2L214.9 271.8L215.5 265.7L216.2 268.6L216.9 272.2L217.5 274.8L218.2 275.9L218.8 278.5L219.5 279.8L220.2 279.1L220.8 280.2L221.5 280.0L222.2 275.2L222.8 270.5L223.5 270.3L224.2 272.0L224.8 268.0L225.5 269.7L226.1 271.7L226.8 274.4L227.5 273.2L228.1 272.8L228.8 278.0L229.5 278.8L230.1 276.7L230.8 278.0L231.4 280.3L232.1 274.1L232.8 272.0L233.4 270.4L234.1 273.2L234.8 272.4L235.4 272.6L236.1 274.1L236.8 276.4L237.4 277.1L238.1 279.5L238.7 281.4L239.4 280.4L240.1 278.9L240.7 277.3L241.4 277.6L242.1 275.4L242.7 273.6L243.4 274.0L244.1 274.3L244.7 278.2L245.4 278.2L246.0 276.3L246.7 275.2L247.4 272.1L248.0 272.7L248.7 274.6L249.4 272.2L250.0 274.4L250.7 274.3L251.3 277.0L252.0 278.9L252.7 280.9L253.3 280.6L254.0 278.5L254.7 280.4L255.3 277.8L256.0 272.7L256.7 270.6L257.3 272.1L258.0 269.0L258.6 270.8L259.3 274.5L260.0 277.3L260.6 280.2L261.3 281.7L262.0 282.7L262.6 279.2L263.3 276.4L263.9 276.0L264.6 275.2L265.3 278.2L265.9 276.1L266.6 275.1L267.3 270.8L267.9 270.5L268.6 274.4L269.3 275.0L269.9 275.0L270.6 273.9L271.2 272.3L271.9 274.0L272.6 273.5L273.2 271.5L273.9 274.2L274.6 276.6L275.2 276.6L275.9 275.9L276.5 275.8L277.2 277.8L277.9 274.9L278.5 272.3L279.2 269.9L279.9 274.3L280.5 277.8L281.2 278.7L281.9 276.7L282.5 280.8L283.2 279.6L283.8 278.9L284.5 276.2L285.2 276.3L285.8 275.7L286.5 273.9L287.2 275.5L287.8 276.9L288.5 279.4L289.2 279.4L289.8 282.3L290.5 283.3L291.1 279.7L291.8 275.0L292.5 272.4L293.1 274.8L293.8 272.6L294.5 271.6L295.1 272.8L295.8 277.8L296.4 280.6L297.1 277.8L297.8 278.8L298.4 280.9L299.1 278.4L299.8 278.5L300.4 275.0L301.1 270.5L301.8 273.7L302.4 272.1L303.1 271.0L303.7 277.3L304.4 277.5L305.1 279.2L305.7 278.5L306.4 277.3L307.1 276.8L307.7 274.3L308.4 273.5L309.0 272.8L309.7 275.1L310.4 274.2L311.0 272.7L311.7 275.7L312.4 274.9L313.0 276.8L313.7 279.0L314.4 277.2L315.0 277.4L315.7 277.0L316.3 272.8L317.0 271.0L317.7 272.4L318.3 272.0L319.0 273.1L319.7 273.0L320.3 273.9L321.0 276.4L321.6 278.7L322.3 283.9L323.0 283.6L323.6 280.1L324.3 278.7L325.0 274.2L325.6 272.0L326.3 272.0L327.0 272.2L327.6 272.5L328.3 271.4L328.9 271.9L329.6 275.3L330.3 276.6L330.9 279.2L331.6 275.8L332.3 277.0L332.9 277.9L333.6 274.6L334.2 272.6L334.9 268.2L335.6 271.5L336.2 276.8L336.9 278.4L337.6 278.2L338.2 280.0L338.9 281.6L339.6 275.5L340.2 276.9L340.9 276.2L341.5 275.8L342.2 275.4L342.9 274.1L343.5 273.5L344.2 275.1L344.9 277.1L345.5 274.1L346.2 276.4L346.9 276.6L347.5 278.6L348.2 280.5L348.8 282.1L349.5 283.3L350.2 282.7L350.8 281.0L351.5 276.8L352.2 276.4L352.8 273.0L353.5 270.3L354.1 272.4L354.8 274.2L355.5 277.7L356.1 282.6L356.8 282.1L357.5 278.4L358.1 275.7L358.8 276.2L359.5 275.5L360.1 274.3L360.8 274.1L361.4 272.8L362.1 273.4L362.8 275.2L363.4 276.5L364.1 280.4L364.8 279.0L365.4 277.6L366.1 275.1L366.7 274.9L367.4 276.1L368.1 272.3L368.7 270.2L369.4 268.4L370.1 272.4L370.7 274.0L371.4 274.1L372.1 274.3L372.7 274.7L373.4 275.1L374.0 274.3L374.7 274.6L375.4 274.3L376.0 271.1L376.7 271.4L377.4 270.5L378.0 271.1L378.7 271.0L379.3 276.5L380.0 275.3L380.7 275.8L381.3 280.5L382.0 280.9L382.7 278.4L383.3 275.9L384.0 269.6L384.7 269.5L385.3 269.5L386.0 267.2L386.6 270.8L387.3 278.4L388.0 280.4L388.6 281.7L389.3 282.3L390.0 282.0L390.6 280.8L391.3 276.6L391.9 274.7L392.6 274.2L393.3 271.9L393.9 271.0L394.6 272.8L395.3 274.3L395.9 275.3L396.6 279.3L397.3 282.9L397.9 282.6L398.6 279.2L399.2 278.4L399.9 276.4L400.6 273.2L401.2 271.1L401.9 268.6L402.6 272.1L403.2 275.6L403.9 275.8L404.6 281.6L405.2 284.9L405.9 283.4L406.5 280.7L407.2 278.0L407.9 275.6L408.5 275.5L409.2 273.6L409.9 272.1L410.5 272.0L411.2 270.7L411.8 272.2L412.5 270.7L413.2 271.8L413.8 274.2L414.5 273.4L415.2 280.2L415.8 279.2L416.5 277.3L417.2 277.9L417.8 276.6L418.5 275.5L419.1 273.7L419.8 275.2L420.5 276.3L421.1 272.5L421.8 270.7L422.5 272.7L423.1 278.2L423.8 277.2L424.4 277.5L425.1 282.4L425.8 281.7L426.4 276.9L427.1 277.3L427.8 276.3L428.4 273.4L429.1 270.5L429.8 271.0L430.4 272.7L431.1 275.6L431.7 279.0L432.4 282.2L433.1 279.7L433.7 276.7L434.4 280.7L435.1 277.9L435.7 276.3L436.4 272.7L437.0 275.0L437.7 279.3L438.4 280.3L439.0 277.7L439.7 282.7L440.4 285.5L441.0 281.4L441.7 277.0L442.4 274.3L443.0 272.0L443.7 266.7L444.3 269.6L445.0 271.5L445.7 272.8L446.3 275.2L447.0 278.9L447.7 276.2L448.3 276.4L449.0 275.0L449.7 271.8L450.3 272.0L451.0 271.0L451.6 272.2L452.3 271.9L453.0 272.9L453.6 277.3L454.3 277.1L455.0 277.7L455.6 279.1L456.3 276.5L456.9 276.2L457.6 277.0L458.3 276.4L458.9 276.6L459.6 275.4L460.3 274.1L460.9 272.7L461.6 274.1L462.3 278.9L462.9 281.1L463.6 281.6L464.2 278.2L464.9 275.5L465.6 273.2L466.2 271.6L466.9 270.7L467.6 270.1L468.2 271.4L468.9 269.6L469.5 272.3L470.2 277.5L470.9 276.4L471.5 277.2L472.2 277.3"/></defs>
<use href="#w3" fill="none" stroke="#9ab0dc" stroke-opacity=".4" stroke-width="1.9" stroke-linejoin="round"/>
<use href="#w3" fill="none" stroke="#465c92" stroke-width=".95" stroke-linejoin="round"/>
<circle cx="28.3" cy="275.6" r="12" fill="#3156a2"/>
<text x="28.3" y="280.8" text-anchor="middle" font-size="14.5" fill="#1a1a1a" stroke="#1a1a1a" stroke-width=".5" font-family="&quot;DejaVu Sans&quot;,&quot;Liberation Sans&quot;,sans-serif">3</text>
<rect x="409" y="293.2" width="62.5" height="13" fill="#fff" fill-opacity=".8"/>
<text x="469.5" y="303.9" text-anchor="end" font-size="11.2" letter-spacing=".1" fill="#444">5.11 uVrms</text>
<defs><path id="w4" d="M48.4 337.6L49.1 340.3L49.7 343.0L50.4 345.7L51.1 346.3L51.7 345.5L52.4 345.2L53.0 342.8L53.7 338.9L54.4 335.5L55.0 334.4L55.7 333.2L56.4 338.1L57.0 341.0L57.7 340.0L58.3 342.7L59.0 346.5L59.7 346.0L60.3 345.3L61.0 342.2L61.7 338.6L62.3 336.3L63.0 338.0L63.7 339.7L64.3 339.6L65.0 342.2L65.6 342.9L66.3 345.2L67.0 348.4L67.6 348.4L68.3 349.4L69.0 345.7L69.6 340.4L70.3 338.2L70.9 336.2L71.6 337.6L72.3 338.2L72.9 340.1L73.6 341.2L74.3 341.8L74.9 343.9L75.6 344.5L76.3 343.2L76.9 341.7L77.6 341.1L78.2 340.7L78.9 338.8L79.6 339.4L80.2 339.5L80.9 337.3L81.6 339.5L82.2 341.2L82.9 340.9L83.6 342.1L84.2 342.9L84.9 344.4L85.5 340.3L86.2 338.5L86.9 337.2L87.5 334.5L88.2 333.9L88.9 337.5L89.5 340.5L90.2 340.2L90.8 340.8L91.5 342.1L92.2 343.8L92.8 343.9L93.5 344.7L94.2 341.5L94.8 338.8L95.5 335.9L96.2 336.7L96.8 338.6L97.5 338.6L98.1 341.3L98.8 341.3L99.5 344.6L100.1 349.9L100.8 351.9L101.5 350.9L102.1 347.9L102.8 344.1L103.4 341.8L104.1 341.1L104.8 340.8L105.4 340.9L106.1 341.8L106.8 342.6L107.4 343.9L108.1 346.2L108.8 347.2L109.4 348.5L110.1 348.7L110.7 345.4L111.4 340.1L112.1 335.9L112.7 335.4L113.4 336.4L114.1 335.3L114.7 339.4L115.4 341.4L116.0 340.9L116.7 341.9L117.4 340.2L118.0 340.8L118.7 343.1L119.4 339.6L120.0 336.3L120.7 335.1L121.4 337.4L122.0 342.8L122.7 349.1L123.3 347.4L124.0 343.5L124.7 340.2L125.3 338.8L126.0 339.5L126.7 341.3L127.3 344.7L128.0 344.1L128.7 343.6L129.3 345.1L130.0 345.5L130.6 342.8L131.3 340.3L132.0 341.0L132.6 341.4L133.3 340.4L134.0 340.2L134.6 340.7L135.3 342.2L135.9 344.3L136.6 344.7L137.3 346.4L137.9 348.8L138.6 347.8L139.3 344.7L139.9 341.8L140.6 339.5L141.3 340.5L141.9 340.2L142.6 338.5L143.2 339.8L143.9 341.4L144.6 341.0L145.2 340.8L145.9 343.6L146.6 343.7L147.2 341.5L147.9 342.7L148.5 343.8L149.2 338.3L149.9 337.4L150.5 339.8L151.2 343.0L151.9 344.9L152.5 346.8L153.2 347.5L153.9 343.1L154.5 341.3L155.2 341.3L155.8 339.5L156.5 339.2L157.2 337.4L157.8 337.4L158.5 338.6L159.2 340.8L159.8 341.8L160.5 343.4L161.1 343.4L161.8 343.1L162.5 344.6L163.1 343.6L163.8 341.1L164.5 340.0L165.1 339.7L165.8 340.5L166.5 340.3L167.1 341.4L167.8 343.8L168.4 347.4L169.1 347.9L169.8 345.0L170.4 348.0L171.1 346.2L171.8 340.5L172.4 340.5L173.1 339.2L173.7 337.5L174.4 338.5L175.1 339.9L175.7 342.2L176.4 341.3L177.1 343.5L177.7 346.9L178.4 346.8L179.1 345.0L179.7 342.6L180.4 342.2L181.0 340.9L181.7 339.3L182.4 338.5L183.0 337.3L183.7 339.7L184.4 342.9L185.0 343.2L185.7 344.7L186.4 343.5L187.0 340.4L187.7 340.9L188.3 337.6L189.0 336.3L189.7 338.5L190.3 341.6L191.0 343.7L191.7 342.2L192.3 343.7L193.0 344.4L193.6 342.2L194.3 338.8L195.0 340.7L195.6 342.2L196.3 341.8L197.0 340.7L197.6 341.1L198.3 341.7L199.0 343.5L199.6 345.3L200.3 346.6L200.9 344.5L201.6 342.8L202.3 344.9L202.9 346.6L203.6 343.4L204.3 340.0L204.9 339.3L205.6 341.6L206.2 341.8L206.9 342.3L207.6 344.0L208.2 344.7L208.9 342.2L209.6 342.7L210.2 342.5L210.9 342.3L211.6 343.2L212.2 342.5L212.9 340.3L213.5 341.7L214.2 341.8L214.9 341.3L215.5 342.5L216.2 342.7L216.9 341.8L217.5 342.8L218.2 342.4L218.8 341.4L219.5 338.9L220.2 337.3L220.8 337.9L221.5 337.1L222.2 337.8L222.8 340.7L223.5 342.4L224.2 344.2L224.8 344.0L225.5 342.7L226.1 342.7L226.8 341.7L227.5 341.3L228.1 339.9L228.8 338.1L229.5 338.2L230.1 339.8L230.8 343.3L231.4 343.5L232.1 342.9L232.8 345.6L233.4 346.2L234.1 344.1L234.8 341.8L235.4 338.8L236.1 339.3L236.8 339.8L237.4 343.0L238.1 343.5L238.7 341.0L239.4 341.6L240.1 344.5L240.7 345.9L241.4 344.5L242.1 343.5L242.7 343.3L243.4 341.7L244.1 338.8L244.7 337.3L245.4 337.4L246.0 337.6L246.7 339.9L247.4 341.3L248.0 342.0L248.7 342.5L249.4 344.8L250.0 344.0L250.7 342.6L251.3 342.2L252.0 339.3L252.7 337.6L253.3 340.3L254.0 339.2L254.7 338.5L255.3 341.8L256.0 341.7L256.7 341.5L257.3 345.2L258.0 347.7L258.6 346.5L259.3 346.7L260.0 347.7L260.6 346.9L261.3 340.3L262.0 337.6L262.6 338.5L263.3 339.0L263.9 338.1L264.6 340.6L265.3 342.0L265.9 343.5L266.6 342.5L267.3 342.8L267.9 341.4L268.6 340.4L269.3 340.5L269.9 338.5L270.6 337.6L271.2 338.4L271.9 339.4L272.6 338.8L273.2 339.8L273.9 339.7L274.6 341.3L275.2 345.3L275.9 342.6L276.5 341.4L277.2 342.7L277.9 340.6L278.5 338.9L279.2 338.7L279.9 335.6L280.5 335.4L281.2 334.7L281.9 338.0L282.5 340.5L283.2 342.3L283.8 343.8L284.5 345.4L285.2 344.3L285.8 343.5L286.5 340.9L287.2 339.0L287.8 338.9L288.5 340.1L289.2 341.2L289.8 340.6L290.5 339.3L291.1 342.6L291.8 345.5L292.5 345.2L293.1 344.6L293.8 344.7L294.5 343.3L295.1 341.8L295.8 339.9L296.4 338.6L297.1 337.4L297.8 339.8L298.4 341.9L299.1 344.0L299.8 345.3L300.4 346.8L301.1 345.7L301.8 344.1L302.4 339.8L303.1 335.8L303.7 334.8L304.4 337.6L305.1 339.0L305.7 340.4L306.4 345.1L307.1 348.3L307.7 348.7L308.4 347.0L309.0 346.2L309.7 344.0L310.4 340.4L311.0 338.6L311.7 336.9L312.4 337.2L313.0 339.5L313.7 340.1L314.4 341.4L315.0 344.1L315.7 346.3L316.3 347.4L317.0 346.2L317.7 344.7L318.3 342.8L319.0 342.4L319.7 341.7L320.3 342.5L321.0 342.4L321.6 344.2L322.3 346.7L323.0 346.6L323.6 345.6L324.3 345.7L325.0 342.1L325.6 338.4L326.3 337.1L327.0 335.7L327.6 338.9L328.3 342.3L328.9 345.7L329.6 349.4L330.3 347.0L330.9 344.4L331.6 345.3L332.3 340.4L332.9 336.8L333.6 334.4L334.2 335.2L334.9 339.1L335.6 341.1L336.2 343.1L336.9 342.7L337.6 341.3L338.2 343.3L338.9 343.1L339.6 340.9L340.2 339.2L340.9 339.1L341.5 339.3L342.2 339.1L342.9 343.5L343.5 346.1L344.2 343.1L344.9 342.1L345.5 345.2L346.2 343.9L346.9 343.9L347.5 344.1L348.2 338.7L348.8 337.8L349.5 336.8L350.2 337.1L350.8 340.3L351.5 341.7L352.2 343.9L352.8 346.1L353.5 344.3L354.1 345.1L354.8 344.4L355.5 340.1L356.1 336.8L356.8 338.8L357.5 340.0L358.1 339.1L358.8 341.0L359.5 346.9L360.1 347.6L360.8 347.2L361.4 346.3L362.1 345.0L362.8 341.8L363.4 338.8L364.1 337.9L364.8 339.2L365.4 341.0L366.1 340.0L366.7 340.8L367.4 343.8L368.1 344.3L368.7 346.3L369.4 344.6L370.1 343.8L370.7 342.9L371.4 338.8L372.1 337.2L372.7 335.6L373.4 339.2L374.0 340.1L374.7 342.7L375.4 345.0L376.0 344.0L376.7 345.1L377.4 344.4L378.0 344.7L378.7 343.9L379.3 342.4L380.0 340.0L380.7 340.0L381.3 340.0L382.0 338.4L382.7 341.7L383.3 343.1L384.0 344.0L384.7 346.0L385.3 344.2L386.0 341.9L386.6 342.0L387.3 341.8L388.0 341.8L388.6 341.7L389.3 339.9L390.0 337.5L390.6 338.5L391.3 339.1L391.9 338.4L392.6 339.9L393.3 341.1L393.9 342.5L394.6 342.5L395.3 342.5L395.9 339.5L396.6 340.4L397.3 339.8L397.9 339.8L398.6 337.7L399.2 338.8L399.9 338.2L400.6 342.3L401.2 342.4L401.9 342.9L402.6 345.1L403.2 343.1L403.9 341.5L404.6 339.6L405.2 339.2L405.9 340.4L406.5 341.3L407.2 340.4L407.9 342.1L408.5 342.7L409.2 343.8L409.9 344.4L410.5 344.1L411.2 344.6L411.8 344.1L412.5 343.8L413.2 341.3L413.8 338.8L414.5 339.3L415.2 342.1L415.8 344.1L416.5 344.9L417.2 347.7L417.8 343.2L418.5 342.1L419.1 342.0L419.8 339.2L420.5 338.3L421.1 337.3L421.8 340.1L422.5 345.6L423.1 346.3L423.8 346.0L424.4 344.1L425.1 341.3L425.8 342.4L426.4 342.0L427.1 339.0L427.8 339.2L428.4 340.5L429.1 343.3L429.8 344.6L430.4 344.9L431.1 346.9L431.7 345.6L432.4 344.7L433.1 344.6L433.7 343.5L434.4 339.4L435.1 337.2L435.7 333.9L436.4 334.9L437.0 337.0L437.7 341.0L438.4 343.6L439.0 345.2L439.7 345.6L440.4 344.1L441.0 342.8L441.7 340.7L442.4 338.8L443.0 337.1L443.7 338.1L444.3 341.2L445.0 341.9L445.7 340.3L446.3 344.4L447.0 343.6L447.7 345.6L448.3 341.9L449.0 342.1L449.7 343.0L450.3 340.7L451.0 340.6L451.6 340.2L452.3 339.6L453.0 341.0L453.6 340.2L454.3 342.2L455.0 344.0L455.6 343.3L456.3 343.6L456.9 344.4L457.6 340.7L458.3 338.7L458.9 338.5L459.6 336.5L460.3 334.8L460.9 338.0L461.6 342.0L462.3 345.1L462.9 347.6L463.6 346.7L464.2 346.9L464.9 343.6L465.6 338.4L466.2 337.3L466.9 339.0L467.6 338.2L468.2 337.9L468.9 339.5L469.5 343.7L470.2 344.5L470.9 343.1L471.5 345.4L472.2 345.4"/></defs>
<use href="#w4" fill="none" stroke="#98c0b0" stroke-opacity=".4" stroke-width="1.9" stroke-linejoin="round"/>
<use href="#w4" fill="none" stroke="#446c61" stroke-width=".95" stroke-linejoin="round"/>
<circle cx="28.3" cy="341.5" r="12" fill="#316b5c"/>
<text x="28.3" y="346.7" text-anchor="middle" font-size="14.5" fill="#1a1a1a" stroke="#1a1a1a" stroke-width=".5" font-family="&quot;DejaVu Sans&quot;,&quot;Liberation Sans&quot;,sans-serif">4</text>
<rect x="409" y="359.1" width="62.5" height="13" fill="#fff" fill-opacity=".8"/>
<text x="469.5" y="369.8" text-anchor="end" font-size="11.2" letter-spacing=".1" fill="#444">3.64 uVrms</text>
<defs><path id="w5" d="M48.4 402.5L49.1 402.4L49.7 403.8L50.4 405.4L51.1 407.3L51.7 410.2L52.4 412.2L53.0 411.2L53.7 409.1L54.4 407.5L55.0 406.4L55.7 405.3L56.4 404.9L57.0 405.6L57.7 406.2L58.3 406.6L59.0 407.4L59.7 410.2L60.3 413.3L61.0 413.5L61.7 411.4L62.3 409.4L63.0 407.8L63.7 406.4L64.3 405.2L65.0 404.0L65.6 403.5L66.3 403.7L67.0 405.2L67.6 408.0L68.3 410.3L69.0 410.4L69.6 409.7L70.3 409.6L70.9 408.9L71.6 406.9L72.3 405.1L72.9 403.6L73.6 402.5L74.3 402.4L74.9 404.6L75.6 408.2L76.3 411.4L76.9 413.4L77.6 414.5L78.2 413.3L78.9 409.7L79.6 405.6L80.2 402.4L80.9 400.2L81.6 399.6L82.2 401.6L82.9 405.2L83.6 410.1L84.2 414.1L84.9 416.5L85.5 416.6L86.2 414.2L86.9 409.9L87.5 404.9L88.2 400.6L88.9 397.7L89.5 397.4L90.2 400.1L90.8 404.1L91.5 409.2L92.2 414.2L92.8 415.8L93.5 414.1L94.2 411.1L94.8 407.8L95.5 403.9L96.2 400.8L96.8 399.7L97.5 399.6L98.1 400.7L98.8 403.9L99.5 409.2L100.1 413.9L100.8 416.1L101.5 415.0L102.1 411.1L102.8 406.3L103.4 401.4L104.1 396.3L104.8 393.8L105.4 395.2L106.1 400.4L106.8 406.9L107.4 412.8L108.1 417.0L108.8 418.0L109.4 414.8L110.1 410.2L110.7 405.5L111.4 400.9L112.1 397.5L112.7 397.5L113.4 400.8L114.1 407.0L114.7 415.4L115.4 422.0L116.0 422.0L116.7 411.9L117.4 397.1L118.0 395.5L118.7 403.4L119.4 413.9L120.0 420.5L120.7 420.5L121.4 416.0L122.0 409.5L122.7 403.2L123.3 398.6L124.0 396.2L124.7 397.0L125.3 401.1L126.0 407.6L126.7 413.7L127.3 417.0L128.0 418.2L128.7 416.8L129.3 411.8L130.0 405.0L130.6 399.2L131.3 396.6L132.0 398.7L132.6 403.0L133.3 407.0L134.0 411.4L134.6 416.5L135.3 418.8L135.9 417.1L136.6 411.9L137.3 405.6L137.9 399.6L138.6 396.1L139.3 396.4L139.9 400.3L140.6 405.6L141.3 410.2L141.9 412.9L142.6 413.2L143.2 411.3L143.9 409.1L144.6 407.0L145.2 404.1L145.9 401.7L146.6 400.9L147.2 401.8L147.9 403.8L148.5 406.1L149.2 409.6L149.9 413.3L150.5 416.2L151.2 416.7L151.9 414.2L152.5 408.7L153.2 403.3L153.9 400.1L154.5 399.1L155.2 400.5L155.8 403.6L156.5 407.0L157.2 409.6L157.8 411.6L158.5 413.2L159.2 413.9L159.8 411.4L160.5 406.0L161.1 402.0L161.8 400.5L162.5 401.9L163.1 405.3L163.8 408.9L164.5 412.0L165.1 414.5L165.8 413.9L166.5 411.0L167.1 407.5L167.8 404.5L168.4 402.8L169.1 402.8L169.8 404.7L170.4 408.0L171.1 411.5L171.8 413.6L172.4 414.7L173.1 414.8L173.7 412.4L174.4 406.5L175.1 400.2L175.7 396.8L176.4 396.6L177.1 398.2L177.7 402.2L178.4 407.6L179.1 411.4L179.7 412.9L180.4 415.0L181.0 416.2L181.7 413.8L182.4 409.3L183.0 405.6L183.7 402.9L184.4 402.2L185.0 403.7L185.7 405.3L186.4 406.6L187.0 409.0L187.7 411.8L188.3 413.2L189.0 412.5L189.7 410.6L190.3 407.9L191.0 405.2L191.7 403.1L192.3 401.6L193.0 400.5L193.6 400.7L194.3 402.6L195.0 407.3L195.6 412.0L196.3 414.9L197.0 416.2L197.6 415.7L198.3 413.7L199.0 410.5L199.6 406.5L200.3 403.0L200.9 399.9L201.6 398.6L202.3 400.0L202.9 403.9L203.6 409.0L204.3 414.0L204.9 418.1L205.6 418.2L206.2 413.7L206.9 408.9L207.6 404.8L208.2 399.4L208.9 395.2L209.6 395.4L210.2 399.3L210.9 404.3L211.6 409.2L212.2 413.3L212.9 416.0L213.5 415.2L214.2 412.7L214.9 408.2L215.5 403.7L216.2 399.0L216.9 395.8L217.5 395.4L218.2 397.8L218.8 401.7L219.5 407.0L220.2 412.8L220.8 415.8L221.5 414.3L222.2 409.3L222.8 403.6L223.5 399.7L224.2 398.1L224.8 398.5L225.5 401.7L226.1 406.2L226.8 410.3L227.5 413.2L228.1 415.6L228.8 416.6L229.5 415.8L230.1 414.4L230.8 411.3L231.4 406.4L232.1 402.7L232.8 402.4L233.4 406.1L234.1 413.5L234.8 415.5L235.4 410.8L236.1 404.7L236.8 400.9L237.4 400.6L238.1 403.1L238.7 406.1L239.4 407.8L240.1 409.3L240.7 411.1L241.4 412.0L242.1 411.7L242.7 410.5L243.4 407.5L244.1 403.9L244.7 401.7L245.4 401.8L246.0 403.8L246.7 406.7L247.4 408.8L248.0 409.6L248.7 410.4L249.4 411.8L250.0 412.5L250.7 409.6L251.3 404.1L252.0 400.0L252.7 399.1L253.3 401.5L254.0 405.5L254.7 409.4L255.3 412.4L256.0 412.6L256.7 409.7L257.3 405.3L258.0 401.3L258.6 400.3L259.3 402.4L260.0 406.3L260.6 409.4L261.3 410.7L262.0 409.9L262.6 407.4L263.3 403.2L263.9 399.8L264.6 398.3L265.3 399.7L265.9 403.1L266.6 406.7L267.3 410.0L267.9 413.2L268.6 414.2L269.3 412.0L269.9 408.3L270.6 404.7L271.2 402.7L271.9 401.9L272.6 402.3L273.2 405.4L273.9 409.4L274.6 411.8L275.2 413.7L275.9 415.8L276.5 416.2L277.2 413.6L277.9 409.9L278.5 406.1L279.2 403.4L279.9 403.1L280.5 404.3L281.2 405.8L281.9 408.8L282.5 412.4L283.2 414.3L283.8 414.5L284.5 413.4L285.2 410.8L285.8 407.6L286.5 405.4L287.2 404.0L287.8 403.0L288.5 402.8L289.2 404.0L289.8 405.8L290.5 407.2L291.1 409.3L291.8 411.0L292.5 410.5L293.1 408.6L293.8 406.7L294.5 403.8L295.1 400.2L295.8 398.2L296.4 399.3L297.1 402.7L297.8 406.2L298.4 409.2L299.1 412.3L299.8 414.5L300.4 414.6L301.1 413.5L301.8 412.1L302.4 409.5L303.1 405.9L303.7 404.0L304.4 404.1L305.1 406.1L305.7 408.3L306.4 409.4L307.1 410.7L307.7 412.4L308.4 412.8L309.0 410.9L309.7 408.6L310.4 406.0L311.0 402.2L311.7 398.9L312.4 397.9L313.0 399.1L313.7 402.0L314.4 406.2L315.0 410.6L315.7 414.5L316.3 417.3L317.0 418.2L317.7 416.1L318.3 411.2L319.0 404.7L319.7 398.6L320.3 394.4L321.0 394.5L321.6 398.7L322.3 405.8L323.0 412.2L323.6 416.3L324.3 418.1L325.0 416.8L325.6 414.7L326.3 412.0L327.0 408.8L327.6 405.9L328.3 402.8L328.9 400.4L329.6 400.6L330.3 403.0L330.9 405.3L331.6 408.3L332.3 412.2L332.9 414.1L333.6 413.2L334.2 410.9L334.9 408.1L335.6 405.0L336.2 402.8L336.9 402.4L337.6 404.0L338.2 408.1L338.9 411.8L339.6 413.6L340.2 413.5L340.9 412.5L341.5 410.5L342.2 408.4L342.9 406.2L343.5 403.1L344.2 401.1L344.9 402.1L345.5 403.8L346.2 405.0L346.9 407.2L347.5 410.7L348.2 413.4L348.8 414.0L349.5 413.2L350.2 410.0L350.8 405.5L351.5 401.3L352.2 399.2L352.8 400.2L353.5 403.4L354.1 407.8L354.8 412.3L355.5 415.0L356.1 415.1L356.8 413.5L357.5 410.4L358.1 406.2L358.8 403.0L359.5 401.6L360.1 400.9L360.8 401.5L361.4 404.8L362.1 408.9L362.8 411.5L363.4 412.2L364.1 411.3L364.8 409.5L365.4 406.5L366.1 401.9L366.7 397.2L367.4 396.6L368.1 400.3L368.7 405.8L369.4 411.4L370.1 416.4L370.7 420.1L371.4 420.9L372.1 417.6L372.7 412.0L373.4 405.9L374.0 400.8L374.7 398.3L375.4 399.4L376.0 401.6L376.7 405.1L377.4 410.7L378.0 416.3L378.7 418.4L379.3 417.1L380.0 414.3L380.7 409.3L381.3 404.3L382.0 401.4L382.7 399.9L383.3 398.6L384.0 398.5L384.7 402.1L385.3 408.3L386.0 414.5L386.6 418.3L387.3 419.9L388.0 418.7L388.6 413.3L389.3 406.6L390.0 401.3L390.6 397.6L391.3 396.7L391.9 399.0L392.6 403.2L393.3 409.7L393.9 415.6L394.6 418.8L395.3 417.8L395.9 414.2L396.6 410.4L397.3 405.9L397.9 400.5L398.6 397.3L399.2 397.1L399.9 400.4L400.6 406.9L401.2 412.3L401.9 415.4L402.6 416.6L403.2 415.0L403.9 411.7L404.6 407.3L405.2 402.9L405.9 399.8L406.5 398.8L407.2 400.6L407.9 403.8L408.5 406.8L409.2 409.8L409.9 412.5L410.5 413.0L411.2 411.9L411.8 410.5L412.5 407.6L413.2 403.3L413.8 400.2L414.5 399.1L415.2 400.9L415.8 405.0L416.5 408.8L417.2 411.4L417.8 413.5L418.5 413.7L419.1 411.5L419.8 407.8L420.5 404.0L421.1 402.0L421.8 401.9L422.5 402.4L423.1 404.0L423.8 408.2L424.4 413.9L425.1 418.6L425.8 418.2L426.4 414.6L427.1 410.8L427.8 407.1L428.4 403.9L429.1 403.4L429.8 405.6L430.4 408.4L431.1 411.1L431.7 413.3L432.4 412.5L433.1 410.4L433.7 409.0L434.4 407.4L435.1 405.1L435.7 402.5L436.4 400.6L437.0 399.5L437.7 400.7L438.4 404.5L439.0 409.2L439.7 412.7L440.4 413.9L441.0 411.9L441.7 407.3L442.4 403.2L443.0 399.4L443.7 396.7L444.3 396.9L445.0 400.5L445.7 406.8L446.3 413.2L447.0 417.4L447.7 418.9L448.3 417.1L449.0 412.6L449.7 407.7L450.3 403.9L451.0 401.2L451.6 401.8L452.3 406.3L453.0 412.6L453.6 417.5L454.3 418.8L455.0 416.2L455.6 412.2L456.3 407.9L456.9 403.3L457.6 399.8L458.3 396.8L458.9 396.0L459.6 399.0L460.3 404.6L460.9 409.7L461.6 411.9L462.3 412.1L462.9 411.4L463.6 409.0L464.2 405.1L464.9 400.1L465.6 395.9L466.2 394.3L466.9 396.6L467.6 400.9L468.2 408.0L468.9 416.1L469.5 421.2L470.2 421.1L470.9 416.9L471.5 410.5L472.2 403.7"/></defs>
<use href="#w5" fill="none" stroke="#f2d878" stroke-opacity=".4" stroke-width="1.9" stroke-linejoin="round"/>
<use href="#w5" fill="none" stroke="#dfb72c" stroke-width=".95" stroke-linejoin="round"/>
<circle cx="28.3" cy="407.4" r="12" fill="#e8ae14"/>
<text x="28.3" y="412.6" text-anchor="middle" font-size="14.5" fill="#1a1a1a" stroke="#1a1a1a" stroke-width=".5" font-family="&quot;DejaVu Sans&quot;,&quot;Liberation Sans&quot;,sans-serif">5</text>
<rect x="409" y="425.0" width="62.5" height="13" fill="#fff" fill-opacity=".8"/>
<text x="469.5" y="435.7" text-anchor="end" font-size="11.2" letter-spacing=".1" fill="#444">8.64 uVrms</text>
<defs><path id="w6" d="M48.4 471.0L49.1 467.1L49.7 464.8L50.4 463.8L51.1 465.0L51.7 468.6L52.4 472.6L53.0 476.4L53.7 479.4L54.4 480.6L55.0 479.4L55.7 476.3L56.4 471.9L57.0 468.2L57.7 465.7L58.3 465.8L59.0 467.9L59.7 472.7L60.3 478.1L61.0 483.4L61.7 486.8L62.3 486.2L63.0 482.7L63.7 477.1L64.3 471.1L65.0 466.4L65.6 462.3L66.3 460.2L67.0 463.8L67.6 471.6L68.3 478.1L69.0 480.4L69.6 480.6L70.3 479.9L70.9 478.4L71.6 474.5L72.3 468.9L72.9 464.3L73.6 462.8L74.3 463.4L74.9 466.0L75.6 470.9L76.3 477.1L76.9 482.1L77.6 485.5L78.2 485.7L78.9 482.5L79.6 476.1L80.2 467.7L80.9 459.7L81.6 455.7L82.2 456.8L82.9 462.9L83.6 471.1L84.2 478.7L84.9 484.1L85.5 486.8L86.2 485.6L86.9 480.7L87.5 472.4L88.2 462.9L88.9 454.8L89.5 451.3L90.2 453.6L90.8 462.9L91.5 477.0L92.2 488.9L92.8 495.7L93.5 495.7L94.2 489.9L94.8 480.7L95.5 469.4L96.2 460.2L96.8 457.5L97.5 459.8L98.1 466.3L98.8 475.2L99.5 485.4L100.1 492.1L100.8 493.1L101.5 489.7L102.1 483.2L102.8 474.8L103.4 465.8L104.1 458.7L104.8 456.8L105.4 459.7L106.1 464.5L106.8 470.2L107.4 476.7L108.1 482.3L108.8 483.6L109.4 481.3L110.1 476.3L110.7 469.4L111.4 462.5L112.1 458.4L112.7 459.1L113.4 462.5L114.1 468.9L114.7 477.1L115.4 483.3L116.0 485.6L116.7 483.9L117.4 480.8L118.0 475.4L118.7 468.8L119.4 463.4L120.0 461.4L120.7 463.7L121.4 468.4L122.0 474.3L122.7 481.0L123.3 486.8L124.0 489.0L124.7 486.4L125.3 481.6L126.0 476.0L126.7 470.0L127.3 464.7L128.0 462.1L128.7 463.5L129.3 468.1L130.0 474.6L130.6 480.2L131.3 481.7L132.0 480.6L132.6 479.6L133.3 478.7L134.0 475.6L134.6 470.1L135.3 465.0L135.9 463.0L136.6 464.5L137.3 468.0L137.9 472.8L138.6 477.5L139.3 480.7L139.9 480.9L140.6 479.5L141.3 477.6L141.9 474.1L142.6 468.3L143.2 463.7L143.9 462.6L144.6 463.8L145.2 467.0L145.9 472.2L146.6 477.2L147.2 479.9L147.9 480.2L148.5 478.9L149.2 476.6L149.9 473.5L150.5 470.1L151.2 467.6L151.9 466.4L152.5 467.0L153.2 469.7L153.9 473.6L154.5 476.6L155.2 478.9L155.8 480.8L156.5 482.5L157.2 481.9L157.8 477.6L158.5 471.8L159.2 467.7L159.8 465.5L160.5 464.1L161.1 463.1L161.8 463.8L162.5 467.4L163.1 472.2L163.8 475.6L164.5 478.1L165.1 479.8L165.8 479.4L166.5 477.4L167.1 475.1L167.8 472.2L168.4 469.1L169.1 467.9L169.8 468.3L170.4 469.6L171.1 471.7L171.8 474.4L172.4 476.8L173.1 478.8L173.7 481.0L174.4 483.1L175.1 484.4L175.7 483.4L176.4 479.7L177.1 475.4L177.7 472.3L178.4 470.5L179.1 469.3L179.7 467.3L180.4 465.6L181.0 466.1L181.7 468.3L182.4 471.7L183.0 475.9L183.7 478.2L184.4 477.4L185.0 475.2L185.7 473.7L186.4 473.2L187.0 472.2L187.7 469.7L188.3 466.5L189.0 466.8L189.7 470.2L190.3 474.2L191.0 476.6L191.7 478.5L192.3 480.1L193.0 480.3L193.6 477.4L194.3 472.8L195.0 468.7L195.6 466.2L196.3 465.2L197.0 465.9L197.6 468.5L198.3 471.8L199.0 475.3L199.6 478.6L200.3 481.1L200.9 481.7L201.6 479.0L202.3 475.3L202.9 471.5L203.6 467.3L204.3 465.1L204.9 465.9L205.6 468.5L206.2 472.1L206.9 477.1L207.6 482.0L208.2 484.3L208.9 483.9L209.6 481.4L210.2 476.6L210.9 469.5L211.6 463.2L212.2 460.2L212.9 460.3L213.5 463.0L214.2 468.2L214.9 475.7L215.5 482.6L216.2 484.7L216.9 481.7L217.5 476.9L218.2 472.5L218.8 469.4L219.5 467.0L220.2 465.2L220.8 465.9L221.5 469.4L222.2 474.1L222.8 480.2L223.5 486.0L224.2 488.6L224.8 487.8L225.5 484.7L226.1 478.7L226.8 471.4L227.5 465.3L228.1 461.9L228.8 461.9L229.5 463.5L230.1 465.7L230.8 468.7L231.4 471.3L232.1 471.9L232.8 472.5L233.4 475.4L234.1 479.6L234.8 482.1L235.4 482.4L236.1 481.5L236.8 478.5L237.4 472.2L238.1 463.6L238.7 457.0L239.4 456.2L240.1 460.0L240.7 464.6L241.4 471.0L242.1 479.0L242.7 485.7L243.4 488.8L244.1 487.1L244.7 480.4L245.4 471.8L246.0 465.2L246.7 461.0L247.4 458.7L248.0 460.3L248.7 466.6L249.4 474.9L250.0 483.1L250.7 488.9L251.3 489.5L252.0 485.6L252.7 479.9L253.3 472.2L254.0 464.2L254.7 459.1L255.3 458.6L256.0 462.6L256.7 470.3L257.3 479.4L258.0 486.3L258.6 488.7L259.3 487.2L260.0 483.1L260.6 478.2L261.3 473.1L262.0 468.9L262.6 467.2L263.3 468.3L263.9 471.6L264.6 476.6L265.3 480.2L265.9 482.0L266.6 480.8L267.3 477.7L267.9 473.8L268.6 469.9L269.3 466.5L269.9 465.2L270.6 465.5L271.2 467.0L271.9 470.2L272.6 474.4L273.2 477.7L273.9 479.3L274.6 479.0L275.2 476.6L275.9 473.7L276.5 471.0L277.2 468.3L277.9 467.2L278.5 468.1L279.2 471.7L279.9 476.3L280.5 479.3L281.2 480.7L281.9 480.1L282.5 477.0L283.2 474.1L283.8 471.3L284.5 468.5L285.2 468.4L285.8 471.1L286.5 475.4L287.2 480.1L287.8 484.4L288.5 485.5L289.2 482.4L289.8 476.5L290.5 469.6L291.1 463.9L291.8 461.4L292.5 462.4L293.1 466.5L293.8 472.0L294.5 477.4L295.1 481.3L295.8 482.5L296.4 480.1L297.1 474.0L297.8 468.2L298.4 465.7L299.1 465.8L299.8 467.3L300.4 469.5L301.1 473.5L301.8 479.2L302.4 483.2L303.1 483.5L303.7 480.3L304.4 475.3L305.1 470.3L305.7 465.4L306.4 462.0L307.1 460.7L307.7 463.2L308.4 468.5L309.0 473.7L309.7 478.7L310.4 482.9L311.0 484.3L311.7 482.4L312.4 478.2L313.0 471.9L313.7 467.1L314.4 464.4L315.0 463.7L315.7 465.8L316.3 470.6L317.0 476.4L317.7 481.4L318.3 484.4L319.0 483.8L319.7 480.7L320.3 476.5L321.0 470.6L321.6 464.1L322.3 459.8L323.0 458.4L323.6 461.8L324.3 469.1L325.0 478.2L325.6 486.4L326.3 491.2L327.0 492.1L327.6 488.2L328.3 481.5L328.9 473.8L329.6 464.9L330.3 459.1L330.9 458.7L331.6 461.9L332.3 468.8L332.9 477.5L333.6 485.1L334.2 489.9L334.9 491.0L335.6 487.9L336.2 480.6L336.9 471.5L337.6 464.9L338.2 459.6L338.9 456.4L339.6 458.3L340.2 465.2L340.9 475.2L341.5 484.6L342.2 488.7L342.9 487.4L343.5 482.9L344.2 476.2L344.9 467.7L345.5 459.8L346.2 456.1L346.9 458.3L347.5 466.4L348.2 484.9L348.8 471.8L349.5 463.2L350.2 460.2L350.8 461.1L351.5 463.1L352.2 466.6L352.8 472.5L353.5 480.2L354.1 487.2L354.8 488.7L355.5 485.1L356.1 480.0L356.8 474.9L357.5 469.7L358.1 465.5L358.8 463.7L359.5 465.8L360.1 471.1L360.8 477.6L361.4 482.2L362.1 484.2L362.8 485.5L363.4 484.1L364.1 479.5L364.8 472.7L365.4 466.3L366.1 462.0L366.7 461.4L367.4 465.6L368.1 471.6L368.7 475.8L369.4 478.6L370.1 481.5L370.7 485.0L371.4 486.0L372.1 484.1L372.7 479.9L373.4 473.7L374.0 466.8L374.7 461.5L375.4 458.6L376.0 459.3L376.7 462.9L377.4 467.9L378.0 472.2L378.7 476.1L379.3 480.8L380.0 484.7L380.7 486.1L381.3 485.1L382.0 482.4L382.7 478.5L383.3 474.0L384.0 467.2L384.7 460.8L385.3 458.9L386.0 461.6L386.6 464.8L387.3 468.7L388.0 473.9L388.6 477.8L389.3 478.6L390.0 477.0L390.6 475.6L391.3 474.5L391.9 471.8L392.6 468.7L393.3 465.9L393.9 464.3L394.6 464.9L395.3 468.9L395.9 474.4L396.6 480.5L397.3 484.9L397.9 486.4L398.6 484.9L399.2 479.6L399.9 473.9L400.6 468.9L401.2 464.7L401.9 462.6L402.6 462.3L403.2 463.3L403.9 466.7L404.6 472.9L405.2 479.1L405.9 484.1L406.5 487.3L407.2 487.9L407.9 484.2L408.5 477.4L409.2 470.1L409.9 464.8L410.5 460.8L411.2 458.8L411.8 461.1L412.5 466.6L413.2 473.7L413.8 480.4L414.5 485.6L415.2 488.8L415.8 488.9L416.5 485.1L417.2 477.3L417.8 467.3L418.5 460.5L419.1 458.9L419.8 460.1L420.5 464.4L421.1 470.2L421.8 476.4L422.5 481.7L423.1 484.2L423.8 483.3L424.4 479.8L425.1 474.1L425.8 466.6L426.4 461.5L427.1 460.5L427.8 462.1L428.4 466.4L429.1 472.5L429.8 478.3L430.4 480.7L431.1 480.4L431.7 479.7L432.4 477.6L433.1 473.5L433.7 468.4L434.4 464.6L435.1 463.8L435.7 465.8L436.4 469.9L437.0 475.0L437.7 479.6L438.4 483.2L439.0 484.8L439.7 483.1L440.4 478.1L441.0 472.1L441.7 468.0L442.4 465.3L443.0 464.8L443.7 466.7L444.3 470.0L445.0 472.9L445.7 475.4L446.3 477.5L447.0 477.8L447.7 477.2L448.3 474.7L449.0 471.0L449.7 468.3L450.3 467.7L451.0 468.6L451.6 469.8L452.3 471.6L453.0 474.3L453.6 476.8L454.3 476.7L455.0 474.4L455.6 472.3L456.3 470.3L456.9 467.9L457.6 466.1L458.3 464.9L458.9 466.6L459.6 472.2L460.3 479.0L460.9 481.5L461.6 479.3L462.3 475.2L462.9 472.7L463.6 471.9L464.2 472.9L464.9 475.0L465.6 477.6L466.2 479.8L466.9 480.2L467.6 479.0L468.2 477.8L468.9 476.4L469.5 472.3L470.2 467.6L470.9 465.5L471.5 465.7L472.2 467.7"/></defs>
<use href="#w6" fill="none" stroke="#fbb090" stroke-opacity=".4" stroke-width="1.9" stroke-linejoin="round"/>
<use href="#w6" fill="none" stroke="#e87a57" stroke-width=".95" stroke-linejoin="round"/>
<circle cx="28.3" cy="473.3" r="12" fill="#f4794f"/>
<text x="28.3" y="478.5" text-anchor="middle" font-size="14.5" fill="#1a1a1a" stroke="#1a1a1a" stroke-width=".5" font-family="&quot;DejaVu Sans&quot;,&quot;Liberation Sans&quot;,sans-serif">6</text>
<rect x="409" y="490.9" width="62.5" height="13" fill="#fff" fill-opacity=".8"/>
<text x="469.5" y="501.6" text-anchor="end" font-size="11.2" letter-spacing=".1" fill="#444">8.51 uVrms</text>
<defs><path id="w7" d="M48.4 541.1L49.1 540.8L49.7 540.9L50.4 541.0L51.1 538.5L51.7 535.5L52.4 535.4L53.0 537.7L53.7 539.7L54.4 541.4L55.0 543.7L55.7 544.5L56.4 542.7L57.0 540.2L57.7 538.2L58.3 537.0L59.0 537.2L59.7 538.4L60.3 538.5L61.0 538.9L61.7 541.6L62.3 545.6L63.0 546.6L63.7 543.8L64.3 541.0L65.0 540.1L65.6 538.9L66.3 536.5L67.0 535.4L67.6 536.9L68.3 539.3L69.0 541.2L69.6 543.1L70.3 544.7L70.9 544.8L71.6 544.0L72.3 543.2L72.9 540.8L73.6 535.8L74.3 531.9L74.9 532.0L75.6 534.5L76.3 536.3L76.9 538.0L77.6 540.9L78.2 544.1L78.9 546.1L79.6 545.9L80.2 543.5L80.9 539.2L81.6 535.3L82.2 533.3L82.9 533.1L83.6 534.7L84.2 538.2L84.9 541.9L85.5 544.6L86.2 544.3L86.9 541.8L87.5 538.7L88.2 535.9L88.9 533.5L89.5 532.9L90.2 533.7L90.8 535.6L91.5 539.4L92.2 543.3L92.8 544.6L93.5 543.0L94.2 540.6L94.8 537.4L95.5 534.1L96.2 531.7L96.8 531.0L97.5 533.0L98.1 537.8L98.8 543.7L99.5 546.7L100.1 547.8L100.8 547.3L101.5 544.4L102.1 541.4L102.8 537.9L103.4 532.5L104.1 527.8L104.8 528.5L105.4 533.2L106.1 539.5L106.8 545.5L107.4 550.8L108.1 554.3L108.8 554.7L109.4 550.6L110.1 542.6L110.7 535.8L111.4 531.3L112.1 529.0L112.7 529.7L113.4 532.1L114.1 537.3L114.7 543.4L115.4 548.2L116.0 550.1L116.7 549.1L117.4 546.7L118.0 542.7L118.7 536.4L119.4 529.1L120.0 524.5L120.7 523.7L121.4 527.1L122.0 534.1L122.7 542.0L123.3 548.7L124.0 552.7L124.7 552.6L125.3 548.9L126.0 543.1L126.7 534.8L127.3 526.6L128.0 522.2L128.7 523.0L129.3 528.1L130.0 536.6L130.6 545.8L131.3 551.3L132.0 553.4L132.6 551.8L133.3 545.6L134.0 535.9L134.6 526.9L135.3 521.0L135.9 518.1L136.6 520.3L137.3 528.0L137.9 539.4L138.6 550.1L139.3 558.5L139.9 563.5L140.6 562.6L141.3 554.8L141.9 542.0L142.6 528.8L143.2 518.5L143.9 514.8L144.6 518.4L145.2 527.4L145.9 538.7L146.6 550.0L147.2 557.7L147.9 558.0L148.5 552.3L149.2 543.9L149.9 535.1L150.5 526.9L151.2 522.1L151.9 522.3L152.5 528.6L153.2 538.9L153.9 549.2L154.5 556.8L155.2 559.9L155.8 558.4L156.5 553.4L157.2 545.3L157.8 537.5L158.5 531.6L159.2 528.8L159.8 529.4L160.5 532.1L161.1 535.0L161.8 539.6L162.5 544.4L163.1 547.9L163.8 550.4L164.5 549.8L165.1 545.2L165.8 539.0L166.5 532.8L167.1 528.6L167.8 526.9L168.4 527.9L169.1 530.3L169.8 534.6L170.4 541.3L171.1 547.8L171.8 550.4L172.4 550.4L173.1 548.9L173.7 544.8L174.4 539.0L175.1 534.5L175.7 533.0L176.4 532.9L177.1 532.9L177.7 533.1L178.4 535.0L179.1 539.4L179.7 544.1L180.4 546.4L181.0 546.1L181.7 543.6L182.4 540.0L183.0 536.0L183.7 531.7L184.4 529.6L185.0 530.4L185.7 532.8L186.4 536.2L187.0 541.1L187.7 547.1L188.3 551.0L189.0 553.0L189.7 554.0L190.3 551.7L191.0 544.1L191.7 535.9L192.3 530.0L193.0 525.3L193.6 523.4L194.3 526.5L195.0 534.2L195.6 543.1L196.3 550.6L197.0 554.9L197.6 555.3L198.3 553.0L199.0 546.8L199.6 540.0L200.3 534.1L200.9 529.9L201.6 527.2L202.3 527.0L202.9 531.5L203.6 538.3L204.3 544.9L204.9 550.0L205.6 552.5L206.2 551.9L206.9 547.2L207.6 540.5L208.2 533.8L208.9 528.2L209.6 526.0L210.2 527.8L210.9 533.9L211.6 541.8L212.2 548.0L212.9 550.5L213.5 548.9L214.2 545.0L214.9 540.4L215.5 534.0L216.2 526.6L216.9 521.7L217.5 522.2L218.2 527.3L218.8 536.0L219.5 546.3L220.2 553.7L220.8 556.1L221.5 554.6L222.2 548.7L222.8 538.9L223.5 528.3L224.2 521.0L224.8 521.9L225.5 530.9L226.1 542.8L226.8 552.7L227.5 557.8L228.1 557.0L228.8 549.6L229.5 538.0L230.1 527.2L230.8 521.6L231.4 520.8L232.1 525.4L232.8 534.7L233.4 544.5L234.1 552.2L234.8 555.4L235.4 553.8L236.1 548.7L236.8 540.7L237.4 530.8L238.1 522.7L238.7 519.2L239.4 519.9L240.1 525.0L240.7 533.0L241.4 541.4L242.1 547.9L242.7 551.0L243.4 549.7L244.1 544.3L244.7 538.0L245.4 532.2L246.0 528.6L246.7 528.5L247.4 529.8L248.0 533.5L248.7 539.5L249.4 546.9L250.0 551.5L250.7 551.8L251.3 548.3L252.0 542.1L252.7 533.8L253.3 524.0L254.0 517.0L254.7 516.2L255.3 520.3L256.0 528.0L256.7 537.7L257.3 545.6L258.0 550.5L258.6 552.1L259.3 549.4L260.0 542.9L260.6 536.4L261.3 530.9L262.0 527.1L262.6 528.0L263.3 533.1L263.9 539.6L264.6 544.8L265.3 548.6L265.9 550.5L266.6 548.6L267.3 543.4L267.9 538.4L268.6 535.1L269.3 533.4L269.9 532.6L270.6 534.0L271.2 537.6L271.9 540.9L272.6 544.4L273.2 548.2L273.9 549.8L274.6 548.4L275.2 545.8L275.9 541.1L276.5 534.9L277.2 529.7L277.9 527.9L278.5 530.7L279.2 536.4L279.9 542.1L280.5 546.3L281.2 547.3L281.9 545.5L282.5 541.2L283.2 536.6L283.8 533.2L284.5 531.3L285.2 530.4L285.8 530.9L286.5 532.7L287.2 536.6L287.8 542.4L288.5 546.9L289.2 547.2L289.8 546.3L290.5 544.5L291.1 542.5L291.8 540.0L292.5 536.4L293.1 532.4L293.8 530.6L294.5 531.7L295.1 534.4L295.8 537.8L296.4 542.1L297.1 546.0L297.8 547.8L298.4 547.8L299.1 547.5L299.8 546.2L300.4 543.1L301.1 539.3L301.8 536.2L302.4 533.8L303.1 530.6L303.7 527.7L304.4 526.5L305.1 528.1L305.7 533.0L306.4 539.4L307.1 545.2L307.7 548.9L308.4 550.9L309.0 549.3L309.7 545.3L310.4 539.8L311.0 533.8L311.7 527.9L312.4 523.0L313.0 522.1L313.7 524.2L314.4 530.6L315.0 539.6L315.7 549.3L316.3 556.5L317.0 558.2L317.7 555.4L318.3 550.2L319.0 542.9L319.7 534.6L320.3 529.7L321.0 529.7L321.6 532.8L322.3 538.2L323.0 544.2L323.6 551.1L324.3 557.1L325.0 558.7L325.6 556.1L326.3 550.2L327.0 542.6L327.6 535.5L328.3 529.9L328.9 526.7L329.6 526.3L330.3 530.8L330.9 538.3L331.6 545.4L332.3 549.8L332.9 551.6L333.6 551.6L334.2 549.9L334.9 544.3L335.6 535.8L336.2 527.6L336.9 522.5L337.6 521.8L338.2 523.5L338.9 525.8L339.6 530.7L340.2 536.1L340.9 540.6L341.5 544.7L342.2 548.9L342.9 551.3L343.5 551.4L344.2 550.3L344.9 548.0L345.5 542.6L346.2 535.4L346.9 529.2L347.5 524.3L348.2 520.7L348.8 521.0L349.5 526.2L350.2 535.6L350.8 546.1L351.5 555.2L352.2 559.0L352.8 557.6L353.5 553.8L354.1 546.8L354.8 536.4L355.5 527.0L356.1 521.6L356.8 521.0L357.5 525.8L358.1 535.3L358.8 547.2L359.5 558.4L360.1 563.7L360.8 562.0L361.4 556.8L362.1 548.2L362.8 536.2L363.4 526.1L364.1 521.3L364.8 521.1L365.4 525.0L366.1 532.5L366.7 541.4L367.4 549.7L368.1 555.0L368.7 555.0L369.4 549.9L370.1 540.8L370.7 530.9L371.4 523.8L372.1 519.8L372.7 519.6L373.4 523.2L374.0 531.5L374.7 542.5L375.4 551.9L376.0 559.0L376.7 562.2L377.4 559.8L378.0 550.1L378.7 536.4L379.3 523.8L380.0 516.0L380.7 513.3L381.3 518.3L382.0 530.1L382.7 544.9L383.3 558.1L384.0 566.2L384.7 568.8L385.3 565.4L386.0 555.2L386.6 541.6L387.3 528.2L388.0 517.4L388.6 511.0L389.3 512.2L390.0 520.2L390.6 532.0L391.3 544.5L391.9 554.8L392.6 560.1L393.3 559.7L393.9 553.1L394.6 541.3L395.3 529.8L395.9 520.4L396.6 515.2L397.3 515.8L397.9 522.5L398.6 532.4L399.2 541.3L399.9 548.0L400.6 552.1L401.2 553.6L401.9 549.2L402.6 541.0L403.2 530.4L403.9 521.4L404.6 518.0L405.2 518.3L405.9 522.9L406.5 530.1L407.2 539.7L407.9 551.7L408.5 562.8L409.2 569.1L409.9 568.2L410.5 563.4L411.2 554.8L411.8 542.8L412.5 530.4L413.2 521.1L413.8 518.4L414.5 521.9L415.2 530.8L415.8 541.2L416.5 552.1L417.2 559.8L417.8 561.5L418.5 558.7L419.1 551.6L419.8 540.4L420.5 528.1L421.1 517.6L421.8 511.3L422.5 510.9L423.1 518.5L423.8 530.2L424.4 541.4L425.1 550.0L425.8 556.5L426.4 560.0L427.1 558.8L427.8 554.7L428.4 546.8L429.1 537.0L429.8 530.8L430.4 528.5L431.1 527.2L431.7 528.0L432.4 533.1L433.1 539.1L433.7 543.8L434.4 546.1L435.1 547.4L435.7 546.9L436.4 543.4L437.0 539.0L437.7 535.1L438.4 531.8L439.0 529.5L439.7 529.0L440.4 533.7L441.0 539.8L441.7 545.5L442.4 551.4L443.0 555.5L443.7 556.4L444.3 553.2L445.0 546.6L445.7 537.6L446.3 531.4L447.0 529.3L447.7 528.7L448.3 528.3L449.0 529.2L449.7 533.5L450.3 540.8L451.0 548.7L451.6 552.1L452.3 551.3L453.0 547.4L453.6 541.8L454.3 534.8L455.0 527.8L455.6 523.3L456.3 523.3L456.9 526.8L457.6 532.8L458.3 541.6L458.9 550.1L459.6 554.8L460.3 556.3L460.9 553.9L461.6 547.3L462.3 539.2L462.9 530.9L463.6 524.9L464.2 524.2L464.9 528.9L465.6 535.9L466.2 543.6L466.9 550.9L467.6 555.3L468.2 556.0L468.9 551.9L469.5 543.9L470.2 535.2L470.9 529.1L471.5 526.2L472.2 526.6"/></defs>
<use href="#w7" fill="none" stroke="#f7a888" stroke-opacity=".4" stroke-width="1.9" stroke-linejoin="round"/>
<use href="#w7" fill="none" stroke="#cf6a4e" stroke-width=".95" stroke-linejoin="round"/>
<circle cx="28.3" cy="539.2" r="12" fill="#e04c33"/>
<text x="28.3" y="544.4" text-anchor="middle" font-size="14.5" fill="#1a1a1a" stroke="#1a1a1a" stroke-width=".5" font-family="&quot;DejaVu Sans&quot;,&quot;Liberation Sans&quot;,sans-serif">7</text>
<rect x="409" y="556.8" width="62.5" height="13" fill="#fff" fill-opacity=".8"/>
<text x="469.5" y="567.5" text-anchor="end" font-size="11.2" letter-spacing=".1" fill="#444">16.7 uVrms</text>
<defs><path id="w8" d="M48.4 600.9L49.1 603.7L49.7 607.7L50.4 611.0L51.1 611.4L51.7 609.6L52.4 607.1L53.0 604.2L53.7 601.5L54.4 600.6L55.0 600.2L55.7 598.9L56.4 599.3L57.0 603.6L57.7 609.3L58.3 612.6L59.0 613.8L59.7 612.9L60.3 610.5L61.0 606.4L61.7 601.4L62.3 597.2L63.0 594.4L63.7 593.7L64.3 597.2L65.0 605.0L65.6 612.2L66.3 615.1L67.0 614.7L67.6 613.7L68.3 610.6L69.0 603.7L69.6 596.8L70.3 592.2L70.9 590.9L71.6 593.5L72.3 599.6L72.9 608.1L73.6 616.2L74.3 621.2L74.9 622.2L75.6 618.3L76.3 610.5L76.9 601.6L77.6 593.5L78.2 588.0L78.9 587.2L79.6 592.5L80.2 600.3L80.9 607.6L81.6 614.2L82.2 617.6L82.9 617.3L83.6 614.3L84.2 609.3L84.9 602.5L85.5 595.8L86.2 591.6L86.9 590.4L87.5 592.4L88.2 598.6L88.9 605.7L89.5 611.2L90.2 615.1L90.8 616.6L91.5 613.7L92.2 607.8L92.8 600.8L93.5 593.9L94.2 590.3L94.8 590.7L95.5 594.6L96.2 601.0L96.8 609.8L97.5 618.5L98.1 624.3L98.8 626.2L99.5 623.7L100.1 616.2L100.8 606.4L101.5 597.4L102.1 591.3L102.8 588.6L103.4 590.5L104.1 596.2L104.8 605.2L105.4 613.1L106.1 617.8L106.8 620.1L107.4 618.2L108.1 610.7L108.8 600.3L109.4 590.8L110.1 584.5L110.7 583.3L111.4 588.4L112.1 597.5L112.7 606.4L113.4 613.0L114.1 617.7L114.7 618.6L115.4 614.3L116.0 606.8L116.7 598.6L117.4 593.4L118.0 592.0L118.7 593.1L119.4 595.8L120.0 602.0L120.7 611.0L121.4 618.2L122.0 619.4L122.7 617.3L123.3 615.4L124.0 612.0L124.7 606.9L125.3 601.3L126.0 597.8L126.7 598.0L127.3 601.3L128.0 607.0L128.7 613.9L129.3 619.0L130.0 619.5L130.6 616.1L131.3 610.9L132.0 605.4L132.6 598.4L133.3 592.3L134.0 591.3L134.6 594.3L135.3 597.5L135.9 601.1L136.6 606.7L137.3 611.9L137.9 613.4L138.6 611.6L139.3 606.8L139.9 601.7L140.6 597.4L141.3 595.1L141.9 595.3L142.6 596.4L143.2 599.4L143.9 603.9L144.6 608.8L145.2 612.7L145.9 614.4L146.6 613.5L147.2 609.9L147.9 605.3L148.5 601.6L149.2 598.5L149.9 597.6L150.5 598.3L151.2 600.8L151.9 605.5L152.5 610.9L153.2 615.2L153.9 617.0L154.5 617.2L155.2 613.8L155.8 607.4L156.5 599.8L157.2 594.5L157.8 592.5L158.5 592.7L159.2 596.4L159.8 603.7L160.5 611.5L161.1 617.2L161.8 620.1L162.5 619.9L163.1 616.6L163.8 611.2L164.5 605.2L165.1 600.9L165.8 598.8L166.5 599.7L167.1 601.7L167.8 603.5L168.4 606.5L169.1 609.4L169.8 611.0L170.4 611.5L171.1 611.2L171.8 608.6L172.4 605.4L173.1 603.1L173.7 601.0L174.4 598.9L175.1 597.3L175.7 597.1L176.4 598.5L177.1 601.1L177.7 604.7L178.4 609.8L179.1 613.9L179.7 614.0L180.4 609.8L181.0 602.9L181.7 595.8L182.4 591.4L183.0 590.7L183.7 592.4L184.4 596.6L185.0 605.3L185.7 615.3L186.4 621.1L187.0 620.6L187.7 616.5L188.3 611.2L189.0 606.4L189.7 601.9L190.3 598.7L191.0 597.8L191.7 598.4L192.3 601.7L193.0 607.7L193.6 613.2L194.3 616.5L195.0 617.4L195.6 616.0L196.3 612.9L197.0 607.4L197.6 599.9L198.3 592.9L199.0 588.9L199.6 589.4L200.3 594.0L200.9 600.5L201.6 608.2L202.3 615.2L202.9 617.5L203.6 616.3L204.3 613.4L204.9 609.1L205.6 603.6L206.2 597.8L206.9 593.9L207.6 593.5L208.2 595.2L208.9 599.4L209.6 605.7L210.2 611.2L210.9 614.3L211.6 614.4L212.2 612.3L212.9 609.4L213.5 605.1L214.2 600.3L214.9 596.6L215.5 595.1L216.2 597.9L216.9 602.6L217.5 607.5L218.2 612.1L218.8 615.7L219.5 616.5L220.2 614.1L220.8 609.6L221.5 603.6L222.2 597.1L222.8 593.4L223.5 593.7L224.2 597.9L224.8 603.5L225.5 610.4L226.1 617.1L226.8 621.0L227.5 621.5L228.1 617.5L228.8 610.3L229.5 601.9L230.1 595.3L230.8 592.0L231.4 592.1L232.1 595.3L232.8 601.1L233.4 607.5L234.1 612.8L234.8 616.2L235.4 617.2L236.1 612.4L236.8 603.2L237.4 594.2L238.1 589.7L238.7 590.1L239.4 593.0L240.1 597.7L240.7 604.5L241.4 610.9L242.1 614.8L242.7 614.0L243.4 611.2L244.1 607.8L244.7 602.1L245.4 596.7L246.0 593.3L246.7 591.7L247.4 594.5L248.0 602.7L248.7 611.9L249.4 618.8L250.0 622.9L250.7 623.1L251.3 618.6L252.0 609.9L252.7 599.8L253.3 592.6L254.0 590.4L254.7 593.3L255.3 600.3L256.0 608.4L256.7 614.7L257.3 620.1L258.0 623.2L258.6 621.9L259.3 615.6L260.0 606.8L260.6 597.3L261.3 590.5L262.0 587.4L262.6 588.0L263.3 591.9L263.9 598.4L264.6 605.6L265.3 612.2L265.9 616.9L266.6 617.8L267.3 615.6L267.9 610.4L268.6 603.8L269.3 597.5L269.9 592.2L270.6 591.0L271.2 594.6L271.9 601.7L272.6 608.2L273.2 612.7L273.9 616.2L274.6 617.4L275.2 614.9L275.9 610.3L276.5 605.9L277.2 601.1L277.9 595.9L278.5 590.7L279.2 589.1L279.9 593.4L280.5 601.0L281.2 607.9L281.9 613.0L282.5 616.6L283.2 618.5L283.8 618.4L284.5 614.9L285.2 609.1L285.8 603.7L286.5 600.1L287.2 597.8L287.8 596.8L288.5 598.0L289.2 601.4L289.8 605.7L290.5 609.7L291.1 611.5L291.8 612.3L292.5 612.9L293.1 610.4L293.8 603.7L294.5 597.0L295.1 591.5L295.8 588.2L296.4 588.6L297.1 593.5L297.8 600.5L298.4 608.0L299.1 615.1L299.8 619.2L300.4 619.6L301.1 616.4L301.8 610.2L302.4 603.7L303.1 598.3L303.7 593.9L304.4 592.4L305.1 595.2L305.7 601.7L306.4 609.0L307.1 614.8L307.7 619.4L308.4 621.5L309.0 618.5L309.7 612.1L310.4 604.2L311.0 596.2L311.7 589.9L312.4 589.1L313.0 594.4L313.7 603.5L314.4 612.8L315.0 621.2L315.7 626.9L316.3 627.9L317.0 622.0L317.7 611.5L318.3 597.6L319.0 584.0L319.7 576.4L320.3 576.5L321.0 583.1L321.6 595.8L322.3 614.0L323.0 630.7L323.6 637.1L324.3 635.9L325.0 624.1L325.6 607.9L326.3 591.9L327.0 581.6L327.6 580.8L328.3 587.8L328.9 601.3L329.6 616.3L330.3 626.1L330.9 627.9L331.6 623.8L332.3 615.9L332.9 602.6L333.6 588.9L334.2 579.1L334.9 575.9L335.6 580.2L336.2 591.4L336.9 605.5L337.6 617.3L338.2 624.2L338.9 625.3L339.6 619.9L340.2 610.0L340.9 598.4L341.5 588.6L342.2 585.5L342.9 587.4L343.5 594.2L344.2 605.1L344.9 617.5L345.5 626.3L346.2 625.5L346.9 618.6L347.5 610.5L348.2 602.6L348.8 595.7L349.5 590.9L350.2 589.2L350.8 593.3L351.5 602.7L352.2 614.1L352.8 623.5L353.5 629.5L354.1 629.4L354.8 622.4L355.5 609.4L356.1 594.4L356.8 583.2L357.5 578.7L358.1 582.8L358.8 594.1L359.5 609.3L360.1 622.3L360.8 629.1L361.4 629.1L362.1 625.0L362.8 617.2L363.4 606.3L364.1 596.0L364.8 588.7L365.4 586.6L366.1 589.3L366.7 595.6L367.4 603.8L368.1 611.0L368.7 615.5L369.4 616.5L370.1 614.6L370.7 611.4L371.4 606.8L372.1 601.2L372.7 596.6L373.4 592.7L374.0 589.8L374.7 590.0L375.4 595.3L376.0 604.2L376.7 610.4L377.4 613.4L378.0 615.3L378.7 614.2L379.3 609.5L380.0 604.6L380.7 599.2L381.3 594.0L382.0 591.1L382.7 592.0L383.3 596.2L384.0 602.4L384.7 608.9L385.3 613.6L386.0 615.1L386.6 613.3L387.3 610.6L388.0 607.9L388.6 604.4L389.3 600.2L390.0 597.2L390.6 596.5L391.3 599.2L391.9 605.2L392.6 612.1L393.3 617.3L393.9 619.7L394.6 621.8L395.3 622.3L395.9 618.9L396.6 610.7L397.3 601.3L397.9 595.2L398.6 592.8L399.2 594.6L399.9 598.6L400.6 604.5L401.2 610.3L401.9 614.7L402.6 617.6L403.2 616.7L403.9 612.3L404.6 606.2L405.2 599.0L405.9 589.8L406.5 583.9L407.2 583.1L407.9 587.5L408.5 594.8L409.2 602.6L409.9 610.9L410.5 617.9L411.2 620.3L411.8 617.9L412.5 612.3L413.2 604.1L413.8 596.3L414.5 590.6L415.2 587.1L415.8 586.0L416.5 589.9L417.2 600.0L417.8 610.6L418.5 618.4L419.1 622.9L419.8 624.5L420.5 621.7L421.1 614.6L421.8 603.6L422.5 592.1L423.1 586.0L423.8 586.1L424.4 590.9L425.1 597.6L425.8 605.4L426.4 611.6L427.1 615.8L427.8 619.0L428.4 619.1L429.1 615.5L429.8 608.0L430.4 598.7L431.1 590.6L431.7 586.7L432.4 589.1L433.1 595.3L433.7 602.5L434.4 608.9L435.1 614.9L435.7 620.8L436.4 622.7L437.0 619.8L437.7 612.6L438.4 605.3L439.0 598.8L439.7 595.9L440.4 597.3L441.0 600.0L441.7 603.7L442.4 607.2L443.0 610.3L443.7 613.3L444.3 614.0L445.0 611.7L445.7 608.0L446.3 602.6L447.0 596.9L447.7 592.9L448.3 592.2L449.0 595.4L449.7 601.0L450.3 606.0L451.0 609.5L451.6 612.6L452.3 616.3L453.0 618.0L453.6 615.2L454.3 609.3L455.0 602.5L455.6 596.8L456.3 593.9L456.9 594.2L457.6 597.8L458.3 602.1L458.9 605.9L459.6 610.2L460.3 613.0L460.9 612.2L461.6 609.2L462.3 605.5L462.9 601.2L463.6 597.5L464.2 595.5L464.9 595.4L465.6 597.4L466.2 601.2L466.9 605.9L467.6 609.6L468.2 610.5L468.9 609.4L469.5 608.7L470.2 608.0L470.9 604.9L471.5 600.9L472.2 598.9"/></defs>
<use href="#w8" fill="none" stroke="#e8a890" stroke-opacity=".4" stroke-width="1.9" stroke-linejoin="round"/>
<use href="#w8" fill="none" stroke="#a86a53" stroke-width=".95" stroke-linejoin="round"/>
<circle cx="28.3" cy="605.1" r="12" fill="#8e5545"/>
<text x="28.3" y="610.3" text-anchor="middle" font-size="14.5" fill="#1a1a1a" stroke="#1a1a1a" stroke-width=".5" font-family="&quot;DejaVu Sans&quot;,&quot;Liberation Sans&quot;,sans-serif">8</text>
<rect x="409" y="622.7" width="62.5" height="13" fill="#fff" fill-opacity=".8"/>
<text x="469.5" y="633.4" text-anchor="end" font-size="11.2" letter-spacing=".1" fill="#444">14.4 uVrms</text>
<path d="M48.40 645.5V642.5H472.20V645.5M133.16 642.5V645.5M217.92 642.5V645.5M302.68 642.5V645.5M387.44 642.5V645.5" fill="none" stroke="#1a1a1a" stroke-width="1.1"/>
<text x="48.1" y="658.8" text-anchor="middle" font-size="10.5" fill="#111" stroke="#111" stroke-width=".22"><tspan font-size="14.5">-</tspan>5</text>
<text x="132.9" y="658.8" text-anchor="middle" font-size="10.5" fill="#111" stroke="#111" stroke-width=".22"><tspan font-size="14.5">-</tspan>4</text>
<text x="217.6" y="658.8" text-anchor="middle" font-size="10.5" fill="#111" stroke="#111" stroke-width=".22"><tspan font-size="14.5">-</tspan>3</text>
<text x="302.4" y="658.8" text-anchor="middle" font-size="10.5" fill="#111" stroke="#111" stroke-width=".22"><tspan font-size="14.5">-</tspan>2</text>
<text x="387.1" y="658.8" text-anchor="middle" font-size="10.5" fill="#111" stroke="#111" stroke-width=".22"><tspan font-size="14.5">-</tspan>1</text>
<text x="472.2" y="658.8" text-anchor="middle" font-size="10.5" fill="#111" stroke="#111" stroke-width=".22">0</text>
<text x="259.8" y="682.2" text-anchor="middle" font-size="11.5" font-family="&quot;DejaVu Sans&quot;,&quot;Liberation Sans&quot;,sans-serif" fill="#111" stroke="#111" stroke-width=".22">Time (s)</text>
</svg>
<svg class="abs" style="left:482px;top:101px" width="478" height="275" viewBox="482 101 478 275" font-family='&quot;DejaVu Sans Condensed&quot;,&quot;DejaVu Sans&quot;,&quot;Liberation Sans&quot;,sans-serif'>
<rect x="548.2" y="118.75" width="385.6" height="201.25" fill="#f5f5f5"/>
<path d="M548.20 320.00H933.80M548.20 299.81H933.80M548.20 287.99H933.80M548.20 279.61H933.80M548.20 273.11H933.80M548.20 267.80H933.80M548.20 263.31H933.80M548.20 259.42H933.80M548.20 255.99H933.80M548.20 252.92H933.80M548.20 232.72H933.80M548.20 220.91H933.80M548.20 212.53H933.80M548.20 206.03H933.80M548.20 200.72H933.80M548.20 196.22H933.80M548.20 192.33H933.80M548.20 188.90H933.80M548.20 185.83H933.80M548.20 165.64H933.80M548.20 153.83H933.80M548.20 145.45H933.80M548.20 138.94H933.80M548.20 133.63H933.80M548.20 129.14H933.80M548.20 125.25H933.80M548.20 121.82H933.80M548.20 118.75H933.80M548.20 118.75V320.00M612.47 118.75V320.00M676.73 118.75V320.00M741.00 118.75V320.00M805.27 118.75V320.00M869.53 118.75V320.00M933.80 118.75V320.00" fill="none" stroke="#cdcdcd" stroke-width="1"/>
<clipPath id="fc"><rect x="548.2" y="118.75" width="386.1" height="201.25"/></clipPath>
<g clip-path="url(#fc)" fill="none" stroke-linejoin="round">
<defs><path id="f1" d="M548.5 218.8L554.5 192.1L560.8 222.4L567.1 246.9L573.4 260.0L579.7 264.5L586.0 278.3L592.3 271.4L598.6 281.1L604.9 281.0L611.2 286.8L617.5 286.3L623.8 288.3L630.1 312.9L636.4 284.4L642.7 292.0L649.0 299.6L655.3 281.6L661.6 294.9L667.9 290.8L674.2 308.7L680.5 295.2L686.8 301.5L693.1 306.9L699.4 296.8L705.7 301.7L712.0 322.7L718.2 303.2L724.5 302.5L730.8 292.2L737.1 293.6L743.4 320.8L749.7 302.3L756.0 330.4L762.3 315.0L768.6 301.3L774.9 309.4L781.2 328.2L787.5 299.0L793.8 310.5L800.1 310.9L806.4 304.1L812.7 299.5L819.0 311.9L825.3 304.8L831.6 319.0L837.9 312.0L844.2 311.8L850.5 311.2L856.8 312.8L863.1 324.6L869.4 305.2L875.7 312.7L882.0 329.4L888.3 328.8L894.6 312.7L900.9 319.8L907.2 306.3L913.5 304.7L919.8 319.7L926.1 330.4L932.4 314.0L938.7 313.7"/></defs>
<use href="#f1" stroke="#b0b0b0" stroke-opacity=".3" stroke-width="1.7"/>
<use href="#f1" stroke="#777777" stroke-width=".85"/>
<defs><path id="f2" d="M548.5 213.1L554.5 186.4L560.8 212.3L567.1 245.4L573.4 252.4L579.7 263.1L586.0 257.7L592.3 264.0L598.6 272.5L604.9 264.7L611.2 269.8L617.5 272.3L623.8 290.2L630.1 291.2L636.4 287.0L642.7 299.3L649.0 283.1L655.3 296.2L661.6 294.3L667.9 303.2L674.2 283.1L680.5 307.4L686.8 294.0L693.1 283.0L699.4 289.0L705.7 310.1L712.0 293.2L718.2 311.0L724.5 290.0L730.8 304.9L737.1 313.0L743.4 304.3L749.7 297.6L756.0 306.7L762.3 315.6L768.6 306.6L774.9 302.4L781.2 309.8L787.5 292.7L793.8 319.3L800.1 307.4L806.4 309.5L812.7 311.2L819.0 299.4L825.3 324.7L831.6 306.5L837.9 307.9L844.2 313.4L850.5 330.4L856.8 330.4L863.1 326.6L869.4 308.2L875.7 318.6L882.0 325.5L888.3 330.4L894.6 330.4L900.9 330.4L907.2 320.3L913.5 320.6L919.8 328.0L926.1 311.3L932.4 319.3L938.7 326.5"/></defs>
<use href="#f2" stroke="#c0a0c8" stroke-opacity=".3" stroke-width="1.7"/>
<use href="#f2" stroke="#6b5274" stroke-width=".85"/>
<defs><path id="f3" d="M548.5 212.6L554.5 185.9L560.8 201.9L567.1 225.7L573.4 236.3L579.7 249.4L586.0 242.9L592.3 261.0L598.6 265.4L604.9 269.3L611.2 258.3L617.5 252.1L623.8 238.0L630.1 270.9L636.4 266.3L642.7 258.7L649.0 282.4L655.3 305.1L661.6 273.8L667.9 275.5L674.2 283.9L680.5 284.0L686.8 272.2L693.1 300.7L699.4 284.4L705.7 265.1L712.0 290.6L718.2 286.8L724.5 288.5L730.8 277.9L737.1 307.0L743.4 295.7L749.7 283.9L756.0 280.9L762.3 307.7L768.6 292.3L774.9 299.9L781.2 293.3L787.5 281.8L793.8 313.8L800.1 306.6L806.4 300.9L812.7 320.5L819.0 317.8L825.3 302.7L831.6 294.6L837.9 300.4L844.2 309.2L850.5 306.2L856.8 303.3L863.1 306.2L869.4 327.7L875.7 330.4L882.0 306.6L888.3 330.4L894.6 307.9L900.9 311.5L907.2 325.8L913.5 317.5L919.8 311.6L926.1 322.3L932.4 326.9L938.7 311.6"/></defs>
<use href="#f3" stroke="#9ab0dc" stroke-opacity=".3" stroke-width="1.7"/>
<use href="#f3" stroke="#465a8c" stroke-width=".85"/>
<defs><path id="f4" d="M548.5 225.9L554.5 199.3L560.8 210.9L567.1 230.2L573.4 245.0L579.7 255.6L586.0 261.0L592.3 260.8L598.6 267.4L604.9 262.9L611.2 264.6L617.5 248.3L623.8 246.2L630.1 263.7L636.4 273.4L642.7 289.7L649.0 284.5L655.3 270.1L661.6 284.0L667.9 315.1L674.2 295.9L680.5 284.4L686.8 274.2L693.1 280.9L699.4 305.9L705.7 292.6L712.0 286.2L718.2 283.9L724.5 304.1L730.8 308.1L737.1 289.8L743.4 275.3L749.7 305.3L756.0 297.1L762.3 304.7L768.6 300.4L774.9 319.6L781.2 314.7L787.5 320.2L793.8 300.7L800.1 280.6L806.4 300.7L812.7 303.9L819.0 310.0L825.3 312.9L831.6 280.6L837.9 299.7L844.2 305.9L850.5 297.3L856.8 330.4L863.1 317.9L869.4 309.4L875.7 300.7L882.0 310.7L888.3 309.2L894.6 314.1L900.9 329.0L907.2 324.2L913.5 327.1L919.8 321.9L926.1 330.4L932.4 315.1L938.7 330.0"/></defs>
<use href="#f4" stroke="#98c0b0" stroke-opacity=".3" stroke-width="1.7"/>
<use href="#f4" stroke="#456a60" stroke-width=".85"/>
<defs><path id="f5" d="M548.5 236.5L554.5 209.8L560.8 220.7L567.1 223.0L573.4 237.8L579.7 241.2L586.0 254.9L592.3 256.9L598.6 254.6L604.9 250.8L611.2 248.3L617.5 211.5L623.8 207.9L630.1 247.7L636.4 265.0L642.7 267.7L649.0 271.7L655.3 275.1L661.6 277.7L667.9 274.3L674.2 280.9L680.5 253.4L686.8 258.6L693.1 272.2L699.4 248.2L705.7 276.0L712.0 299.0L718.2 296.2L724.5 279.8L730.8 293.0L737.1 277.2L743.4 296.6L749.7 280.8L756.0 301.5L762.3 276.1L768.6 286.0L774.9 293.5L781.2 291.4L787.5 289.1L793.8 287.4L800.1 310.5L806.4 293.7L812.7 291.5L819.0 288.5L825.3 288.8L831.6 310.5L837.9 293.2L844.2 310.9L850.5 301.6L856.8 313.2L863.1 297.6L869.4 312.3L875.7 312.6L882.0 328.1L888.3 318.1L894.6 306.8L900.9 308.6L907.2 325.4L913.5 312.2L919.8 324.7L926.1 329.4L932.4 310.7L938.7 302.8"/></defs>
<use href="#f5" stroke="#f2d878" stroke-opacity=".3" stroke-width="1.7"/>
<use href="#f5" stroke="#d9b23a" stroke-width=".85"/>
<defs><path id="f6" d="M548.5 240.5L554.5 213.8L560.8 211.6L567.1 222.2L573.4 242.2L579.7 226.8L586.0 247.1L592.3 237.4L598.6 246.9L604.9 250.8L611.2 233.6L617.5 192.1L623.8 189.6L630.1 237.8L636.4 240.3L642.7 263.9L649.0 257.4L655.3 254.1L661.6 254.1L667.9 267.5L674.2 256.0L680.5 267.9L686.8 265.6L693.1 245.2L699.4 267.1L705.7 271.3L712.0 264.2L718.2 274.3L724.5 275.2L730.8 274.6L737.1 273.0L743.4 262.7L749.7 265.4L756.0 270.8L762.3 297.4L768.6 282.4L774.9 276.4L781.2 289.7L787.5 290.9L793.8 288.9L800.1 296.2L806.4 288.4L812.7 289.8L819.0 280.0L825.3 292.7L831.6 285.2L837.9 288.0L844.2 306.0L850.5 281.3L856.8 294.5L863.1 305.6L869.4 314.6L875.7 298.9L882.0 309.7L888.3 309.7L894.6 312.4L900.9 324.1L907.2 320.4L913.5 318.3L919.8 299.7L926.1 320.6L932.4 319.1L938.7 298.2"/></defs>
<use href="#f6" stroke="#fbb090" stroke-opacity=".3" stroke-width="1.7"/>
<use href="#f6" stroke="#e0734f" stroke-width=".85"/>
<defs><path id="f7" d="M548.5 232.6L554.5 205.9L560.8 199.2L567.1 212.1L573.4 225.2L579.7 234.6L586.0 239.2L592.3 230.8L598.6 234.1L604.9 256.1L611.2 223.8L617.5 191.7L623.8 186.5L630.1 216.2L636.4 240.6L642.7 246.3L649.0 262.7L655.3 252.2L661.6 247.0L667.9 237.8L674.2 255.6L680.5 261.8L686.8 238.7L693.1 242.0L699.4 250.2L705.7 261.4L712.0 273.9L718.2 258.1L724.5 256.5L730.8 284.4L737.1 270.3L743.4 253.3L749.7 253.1L756.0 291.2L762.3 277.1L768.6 278.1L774.9 284.1L781.2 289.9L787.5 306.0L793.8 298.6L800.1 295.4L806.4 281.6L812.7 282.5L819.0 284.6L825.3 294.9L831.6 300.5L837.9 279.9L844.2 298.5L850.5 306.1L856.8 299.9L863.1 301.9L869.4 311.7L875.7 323.9L882.0 318.7L888.3 316.0L894.6 302.1L900.9 290.6L907.2 323.9L913.5 317.0L919.8 311.8L926.1 317.0L932.4 305.7L938.7 306.0"/></defs>
<use href="#f7" stroke="#f7a888" stroke-opacity=".3" stroke-width="1.7"/>
<use href="#f7" stroke="#c8644a" stroke-width=".85"/>
<defs><path id="f8" d="M548.5 207.8L554.5 181.1L560.8 193.1L567.1 217.9L573.4 223.7L579.7 230.9L586.0 231.6L592.3 240.0L598.6 240.5L604.9 246.7L611.2 223.7L617.5 183.2L623.8 182.5L630.1 232.6L636.4 257.1L642.7 270.9L649.0 258.6L655.3 262.8L661.6 248.3L667.9 271.0L674.2 254.1L680.5 255.9L686.8 239.9L693.1 247.2L699.4 280.8L705.7 275.2L712.0 281.4L718.2 276.0L724.5 265.2L730.8 270.8L737.1 287.5L743.4 296.6L749.7 288.4L756.0 286.9L762.3 276.0L768.6 293.8L774.9 290.3L781.2 274.1L787.5 290.4L793.8 286.6L800.1 285.5L806.4 289.2L812.7 283.2L819.0 296.9L825.3 302.0L831.6 307.2L837.9 297.2L844.2 288.3L850.5 316.6L856.8 308.3L863.1 302.8L869.4 309.7L875.7 312.5L882.0 314.9L888.3 323.5L894.6 314.2L900.9 313.9L907.2 330.4L913.5 330.4L919.8 321.4L926.1 330.4L932.4 316.2L938.7 307.5"/></defs>
<use href="#f8" stroke="#e8a890" stroke-opacity=".3" stroke-width="1.7"/>
<use href="#f8" stroke="#9c6450" stroke-width=".85"/>
</g>
<path d="M543.60 118.75V320.00M541.8 299.81H543.6M541.8 287.99H543.6M541.8 279.61H543.6M541.8 273.11H543.6M541.8 267.80H543.6M541.8 263.31H543.6M541.8 259.42H543.6M541.8 255.99H543.6M541.8 232.72H543.6M541.8 220.91H543.6M541.8 212.53H543.6M541.8 206.03H543.6M541.8 200.72H543.6M541.8 196.22H543.6M541.8 192.33H543.6M541.8 188.90H543.6M541.8 165.64H543.6M541.8 153.83H543.6M541.8 145.45H543.6M541.8 138.94H543.6M541.8 133.63H543.6M541.8 129.14H543.6M541.8 125.25H543.6M541.8 121.82H543.6M539.8 320.00H543.6M539.8 252.92H543.6M539.8 185.83H543.6M539.8 118.75H543.6M548.20 324.6H933.80M612.47 324.6V327.8M676.73 324.6V327.8M741.00 324.6V327.8M805.27 324.6V327.8M869.53 324.6V327.8M933.80 324.6V327.8" fill="none" stroke="#1a1a1a" stroke-width="1.1"/>
<text x="612.5" y="341.2" text-anchor="middle" font-size="10.5" fill="#111" stroke="#111" stroke-width=".22">10</text>
<text x="676.7" y="341.2" text-anchor="middle" font-size="10.5" fill="#111" stroke="#111" stroke-width=".22">20</text>
<text x="741.0" y="341.2" text-anchor="middle" font-size="10.5" fill="#111" stroke="#111" stroke-width=".22">30</text>
<text x="805.3" y="341.2" text-anchor="middle" font-size="10.5" fill="#111" stroke="#111" stroke-width=".22">40</text>
<text x="869.5" y="341.2" text-anchor="middle" font-size="10.5" fill="#111" stroke="#111" stroke-width=".22">50</text>
<text x="933.8" y="341.2" text-anchor="middle" font-size="10.5" fill="#111" stroke="#111" stroke-width=".22">60</text>
<text x="741.2" y="364.6" text-anchor="middle" font-size="11.5" font-family="&quot;DejaVu Sans&quot;,&quot;Liberation Sans&quot;,sans-serif" fill="#111" stroke="#111" stroke-width=".22">Frequency (Hz)</text>
<text transform="translate(534.2 319.5) rotate(-90)" text-anchor="middle" font-size="10.5" fill="#111" stroke="#111" stroke-width=".22">0.1</text>
<text transform="translate(534.2 252.4) rotate(-90)" text-anchor="middle" font-size="10.5" fill="#111" stroke="#111" stroke-width=".22">1</text>
<text transform="translate(534.2 185.3) rotate(-90)" text-anchor="middle" font-size="10.5" fill="#111" stroke="#111" stroke-width=".22">10</text>
<text transform="translate(534.2 118.2) rotate(-90)" text-anchor="middle" font-size="10.5" fill="#111" stroke="#111" stroke-width=".22">100</text>
<text transform="translate(512.3 218.500) rotate(-90)" text-anchor="middle" font-size="11.5" font-family="&quot;DejaVu Sans&quot;,&quot;Liberation Sans&quot;,sans-serif" fill="#111" stroke="#111" stroke-width=".22">Amplitude (uV)</text>
</svg>
<svg class="abs" style="left:482px;top:418px" width="478" height="275" viewBox="482 418 478 275" font-family='&quot;DejaVu Sans Condensed&quot;,&quot;DejaVu Sans&quot;,&quot;Liberation Sans&quot;,sans-serif'>
<defs><clipPath id="hc"><circle cx="722" cy="560.5" r="100"/></clipPath><filter id="hb" x="-5%" y="-5%" width="110%" height="110%"><feGaussianBlur stdDeviation="0.9"/></filter></defs>
<path d="M710.5 461L721.8 443.5L733.5 461" fill="#fff" stroke="#8c8c8c" stroke-width="1"/>
<ellipse cx="621.5" cy="560" rx="8.5" ry="16.5" fill="#fff" stroke="#8c8c8c" stroke-width="1"/>
<ellipse cx="822.5" cy="560" rx="8.5" ry="16.5" fill="#fff" stroke="#8c8c8c" stroke-width="1"/>
<g clip-path="url(#hc)"><g filter="url(#hb)">
<rect x="615" y="455" width="215" height="212" fill="#fdd9cc"/>
<path d="M648 478L700 448L790 448L815 498L806 505C796 511 785 517 776 524C772 532 773 545 775 556C773 571 752 571 750 556C751 545 749 535 741 529C731 524 721 522 711 519C697 516 685 511 676 505C668 499 661 491 654 484Z" fill="#ecdfe4"/>
<path d="M684 466C690 464 694 470 699 480C703 488 710 486 717 483C725 481 732 483 738 487C746 492 756 490 762 484C767 478 772 473 778 474L790 452L680 450Z" fill="#f5f1ef"/>
<path d="M615 536C628 540 640 545 652 549C668 554 684 558 698 563C708 567 716 569 724 570C736 571 748 575 760 578C774 579 788 571 800 564C810 559 818 556 830 553L830 670L615 670Z" fill="#f3cdba"/>
<path d="M615 612C628 606 640 601 652 597C668 592 690 587 710 584.5C726 583.5 742 587 756 591.5C772 596 790 599 806 599.5C814 599.5 822 598 830 595L830 670L615 670Z" fill="#e9b4a4"/>
<path d="M660 668C662 650 670 634 684 624C696 617 710 614.5 724 615C740 615 754 619 764 629C772 639 778 652 781 668Z" fill="#f0a08a"/>
<path d="M667 668C669 652 677 637 689 628C700 620 712 618 724 618.5C738 618.5 750 622 759 631C767 640 772 653 774 668Z" fill="#f18d75"/>
</g></g>
<circle cx="722" cy="560.5" r="100" fill="none" stroke="#8c8c8c" stroke-width="1.1"/>
<circle cx="697.3" cy="477.3" r="11.3" fill="#f5f2f0" stroke="#908a86" stroke-width=".9"/>
<text x="697.3" y="481.9" text-anchor="middle" font-size="12" fill="#222">1</text>
<circle cx="746.7" cy="477.3" r="11.3" fill="#f5f2f0" stroke="#908a86" stroke-width=".9"/>
<text x="746.7" y="481.9" text-anchor="middle" font-size="12" fill="#222">2</text>
<circle cx="681.7" cy="561" r="11.3" fill="#fcdacd" stroke="#908a86" stroke-width=".9"/>
<text x="681.7" y="565.6" text-anchor="middle" font-size="12" fill="#222">3</text>
<circle cx="762.3" cy="561" r="11.3" fill="#ece0e7" stroke="#908a86" stroke-width=".9"/>
<text x="762.3" y="565.6" text-anchor="middle" font-size="12" fill="#222">4</text>
<circle cx="653.3" cy="615" r="11.3" fill="#e6b1a1" stroke="#908a86" stroke-width=".9"/>
<text x="653.3" y="619.6" text-anchor="middle" font-size="12" fill="#222">5</text>
<circle cx="790.7" cy="615" r="11.3" fill="#ecbaa9" stroke="#908a86" stroke-width=".9"/>
<text x="790.7" y="619.6" text-anchor="middle" font-size="12" fill="#222">6</text>
<circle cx="697.3" cy="645" r="11.3" fill="#ef8c74" stroke="#908a86" stroke-width=".9"/>
<text x="697.3" y="649.6" text-anchor="middle" font-size="12" fill="#222">7</text>
<circle cx="746.7" cy="645" r="11.3" fill="#f08b72" stroke="#908a86" stroke-width=".9"/>
<text x="746.7" y="649.6" text-anchor="middle" font-size="12" fill="#222">8</text>
<text x="722" y="566.3" text-anchor="middle" font-size="12" fill="#222">R</text>
</svg>
<div class="abs" style="left:0;top:692.5px;width:960px;height:27.5px;background:#1d4474;border-top:2.2px solid #0a1b38"></div>
<div class="abs" style="left:4.5px;top:696.6px;width:955.3px;height:20px;background:#fff;border:1px solid #0d2444;font-size:12.45px;line-height:18.6px;padding-left:3.8px;color:#2a2a2a;white-space:nowrap">Data stream started.</div>
<div class="item" style="top:101px;height:18px">Auto</div>
<div class="item" style="top:118px;height:18px">50 uV</div>
<div class="item" style="top:135px;height:18px">100 uV</div>
<div class="item" style="top:152px;height:17px">200 uV</div>
<div class="item" style="top:168px;height:18px">400 uV</div>
<div class="item" style="top:185px;height:18px">1000 uV</div>
<div class="item" style="top:202px;height:18px">10000 uV</div>
<svg class="abs" style="left:379px;top:98px" width="14" height="20" viewBox="0 0 14 20"><path d="M1.5 1.2L1.5 15.2L4.8 12.2L7.3 17.8L9.6 16.8L7.1 11.4L11.5 11.2Z" fill="#111" stroke="#fff" stroke-width="1" stroke-linejoin="round"/></svg>
</body></html>
